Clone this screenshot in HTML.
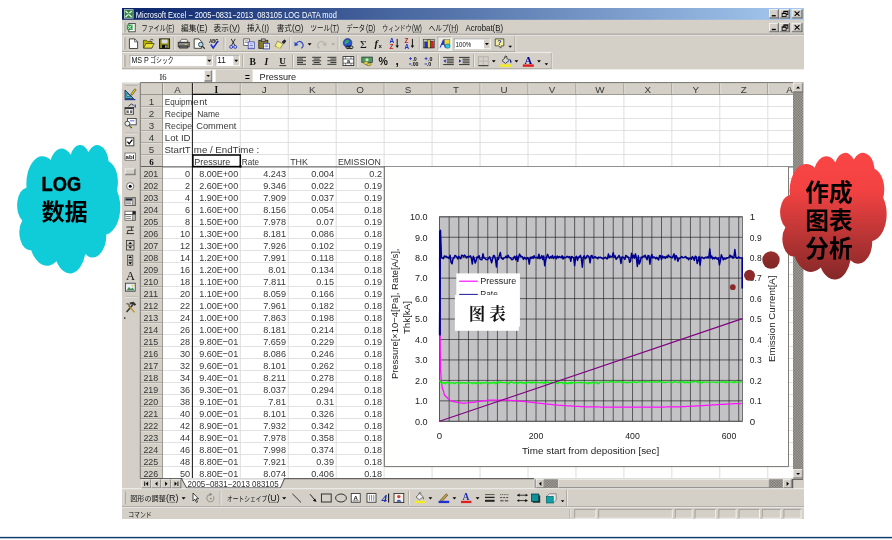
<!DOCTYPE html>
<html><head><meta charset="utf-8"><title>Excel LOG DATA</title>
<style>
html,body{margin:0;padding:0;background:#fff;}
body{width:892px;height:540px;overflow:hidden;font-family:"Liberation Sans",sans-serif;}
svg{display:block;font-family:"Liberation Sans",sans-serif;}
</style></head><body>
<svg width="892" height="540" viewBox="0 0 892 540">
<defs>
<linearGradient id="tg" x1="0" y1="0" x2="1" y2="0"><stop offset="0" stop-color="#0a246a"/><stop offset="1" stop-color="#a6caf0"/></linearGradient>
<linearGradient id="rg" x1="0" y1="0" x2="0" y2="1"><stop offset="0" stop-color="#fb4545"/><stop offset="0.3" stop-color="#f24242"/><stop offset="1" stop-color="#842828"/></linearGradient>
<linearGradient id="rg2" x1="0" y1="0" x2="0" y2="1"><stop offset="0" stop-color="#9a2e2e"/><stop offset="1" stop-color="#7e2626"/></linearGradient>
<pattern id="dith" width="2.7" height="2.7" patternUnits="userSpaceOnUse"><rect width="2.7" height="2.7" fill="#b0ada6"/><rect width="1.35" height="1.35" fill="#6c6a66"/><rect x="1.35" y="1.35" width="1.35" height="1.35" fill="#6c6a66"/></pattern>
<filter id="soft" x="0" y="0" width="100%" height="100%" filterUnits="userSpaceOnUse" color-interpolation-filters="sRGB"><feGaussianBlur stdDeviation="0.38"/></filter>
</defs>
<rect x="0" y="0" width="892" height="540" fill="#fff"/>
<rect x="0" y="536.85" width="892" height="1.45" fill="#123a6b"/>
<g filter="url(#soft)">
<rect x="122" y="8" width="682" height="511" fill="#d4d0c8"/>
<rect x="122" y="8" width="682" height="11.8" fill="url(#tg)"/>
<rect x="124" y="9.3" width="9.4" height="9.2" fill="#e8f0e8"/>
<rect x="124.6" y="9.9" width="8.2" height="8" fill="#2f8040"/>
<path d="M125.6 11l6 6M131.6 11l-6 6" fill="none" stroke="#e6f2e6" stroke-width="1.3"/>
<rect x="124.6" y="13.3" width="8.2" height="1" fill="#2f8040"/>
<text x="135.8" y="17.6" font-size="8.6" fill="#fff" textLength="201" lengthAdjust="spacingAndGlyphs">Microsoft Excel − 2005−0831−2013_083105 LOG DATA mod</text>
<rect x="769.2" y="9.3" width="9.8" height="9.1" fill="#d4d0c8"/>
<line x1="769.2" y1="9.65" x2="779" y2="9.65" stroke="#fff" stroke-width="0.7"/>
<line x1="769.55" y1="9.3" x2="769.55" y2="18.4" stroke="#fff" stroke-width="0.7"/>
<line x1="769.2" y1="18.05" x2="779" y2="18.05" stroke="#404040" stroke-width="0.7"/>
<line x1="778.65" y1="9.3" x2="778.65" y2="18.4" stroke="#404040" stroke-width="0.7"/>
<line x1="769.9" y1="17.35" x2="778.3" y2="17.35" stroke="#808080" stroke-width="0.7"/>
<line x1="777.95" y1="10" x2="777.95" y2="17.7" stroke="#808080" stroke-width="0.7"/>
<rect x="771.8" y="15.1" width="4" height="1.3" fill="#000"/>
<rect x="779.6" y="9.3" width="10.2" height="9.1" fill="#d4d0c8"/>
<line x1="779.6" y1="9.65" x2="789.8" y2="9.65" stroke="#fff" stroke-width="0.7"/>
<line x1="779.95" y1="9.3" x2="779.95" y2="18.4" stroke="#fff" stroke-width="0.7"/>
<line x1="779.6" y1="18.05" x2="789.8" y2="18.05" stroke="#404040" stroke-width="0.7"/>
<line x1="789.45" y1="9.3" x2="789.45" y2="18.4" stroke="#404040" stroke-width="0.7"/>
<line x1="780.3" y1="17.35" x2="789.1" y2="17.35" stroke="#808080" stroke-width="0.7"/>
<line x1="788.75" y1="10" x2="788.75" y2="17.7" stroke="#808080" stroke-width="0.7"/>
<rect x="783.8" y="11.2" width="4" height="3.4" fill="none" stroke="#000" stroke-width="0.8"/>
<rect x="783.8" y="11" width="4" height="1" fill="#000"/>
<rect x="782.1" y="13.2" width="4" height="3.4" fill="#d4d0c8" stroke="#000" stroke-width="0.8"/>
<rect x="782.1" y="13" width="4" height="1" fill="#000"/>
<rect x="791.8" y="9.3" width="10.6" height="9.1" fill="#d4d0c8"/>
<line x1="791.8" y1="9.65" x2="802.4" y2="9.65" stroke="#fff" stroke-width="0.7"/>
<line x1="792.15" y1="9.3" x2="792.15" y2="18.4" stroke="#fff" stroke-width="0.7"/>
<line x1="791.8" y1="18.05" x2="802.4" y2="18.05" stroke="#404040" stroke-width="0.7"/>
<line x1="802.05" y1="9.3" x2="802.05" y2="18.4" stroke="#404040" stroke-width="0.7"/>
<line x1="792.5" y1="17.35" x2="801.7" y2="17.35" stroke="#808080" stroke-width="0.7"/>
<line x1="801.35" y1="10" x2="801.35" y2="17.7" stroke="#808080" stroke-width="0.7"/>
<path d="M794.7 11.35l4.8 4.6M799.5 11.35l-4.8 4.6" fill="none" stroke="#000" stroke-width="1.15"/>
<rect x="769.2" y="23" width="9.8" height="9.1" fill="#d4d0c8"/>
<line x1="769.2" y1="23.35" x2="779" y2="23.35" stroke="#fff" stroke-width="0.7"/>
<line x1="769.55" y1="23" x2="769.55" y2="32.1" stroke="#fff" stroke-width="0.7"/>
<line x1="769.2" y1="31.75" x2="779" y2="31.75" stroke="#404040" stroke-width="0.7"/>
<line x1="778.65" y1="23" x2="778.65" y2="32.1" stroke="#404040" stroke-width="0.7"/>
<line x1="769.9" y1="31.05" x2="778.3" y2="31.05" stroke="#808080" stroke-width="0.7"/>
<line x1="777.95" y1="23.7" x2="777.95" y2="31.4" stroke="#808080" stroke-width="0.7"/>
<rect x="771.8" y="28.8" width="4" height="1.3" fill="#000"/>
<rect x="779.6" y="23" width="10.2" height="9.1" fill="#d4d0c8"/>
<line x1="779.6" y1="23.35" x2="789.8" y2="23.35" stroke="#fff" stroke-width="0.7"/>
<line x1="779.95" y1="23" x2="779.95" y2="32.1" stroke="#fff" stroke-width="0.7"/>
<line x1="779.6" y1="31.75" x2="789.8" y2="31.75" stroke="#404040" stroke-width="0.7"/>
<line x1="789.45" y1="23" x2="789.45" y2="32.1" stroke="#404040" stroke-width="0.7"/>
<line x1="780.3" y1="31.05" x2="789.1" y2="31.05" stroke="#808080" stroke-width="0.7"/>
<line x1="788.75" y1="23.7" x2="788.75" y2="31.4" stroke="#808080" stroke-width="0.7"/>
<rect x="783.8" y="24.9" width="4" height="3.4" fill="none" stroke="#000" stroke-width="0.8"/>
<rect x="783.8" y="24.7" width="4" height="1" fill="#000"/>
<rect x="782.1" y="26.9" width="4" height="3.4" fill="#d4d0c8" stroke="#000" stroke-width="0.8"/>
<rect x="782.1" y="26.7" width="4" height="1" fill="#000"/>
<rect x="791.8" y="23" width="10.6" height="9.1" fill="#d4d0c8"/>
<line x1="791.8" y1="23.35" x2="802.4" y2="23.35" stroke="#fff" stroke-width="0.7"/>
<line x1="792.15" y1="23" x2="792.15" y2="32.1" stroke="#fff" stroke-width="0.7"/>
<line x1="791.8" y1="31.75" x2="802.4" y2="31.75" stroke="#404040" stroke-width="0.7"/>
<line x1="802.05" y1="23" x2="802.05" y2="32.1" stroke="#404040" stroke-width="0.7"/>
<line x1="792.5" y1="31.05" x2="801.7" y2="31.05" stroke="#808080" stroke-width="0.7"/>
<line x1="801.35" y1="23.7" x2="801.35" y2="31.4" stroke="#808080" stroke-width="0.7"/>
<path d="M794.7 25.05l4.8 4.6M799.5 25.05l-4.8 4.6" fill="none" stroke="#000" stroke-width="1.15"/>
<line x1="122" y1="34.3" x2="804" y2="34.3" stroke="#7f7c76" stroke-width="0.9"/>
<line x1="122" y1="35.1" x2="804" y2="35.1" stroke="#fff" stroke-width="0.7"/>
<line x1="124" y1="22.3" x2="124" y2="32.5" stroke="#fff" stroke-width="0.8"/>
<line x1="124.9" y1="22.3" x2="124.9" y2="32.5" stroke="#8a8780" stroke-width="0.8"/>
<rect x="128.8" y="23.4" width="6.4" height="8.4" fill="#fff" stroke="#333" stroke-width="0.8"/>
<rect x="126.8" y="24.6" width="5.8" height="5.4" fill="#2f9a3a"/>
<path d="M127.8 25.6l3.6 3.4M131.4 25.6l-3.6 3.4" fill="none" stroke="#dff" stroke-width="0.9"/>
<text x="141.6" y="31" font-size="7.8" fill="#111" textLength="24.2" lengthAdjust="spacingAndGlyphs" font-family="&quot;Liberation Sans&quot;, &quot;Noto Sans CJK JP&quot;, sans-serif">ファイル</text>
<text x="166.13" y="31" font-size="8.4" fill="#111" textLength="8.15" lengthAdjust="spacingAndGlyphs">(F)</text>
<line x1="168.26" y1="32.1" x2="172.16" y2="32.1" stroke="#444" stroke-width="0.6"/>
<text x="181" y="31" font-size="7.8" fill="#111" textLength="15.4" lengthAdjust="spacingAndGlyphs" font-family="&quot;Liberation Sans&quot;, &quot;Noto Sans CJK JP&quot;, sans-serif">編集</text>
<text x="196.72" y="31" font-size="8.4" fill="#111" textLength="10.56" lengthAdjust="spacingAndGlyphs">(E)</text>
<line x1="199.36" y1="32.1" x2="204.65" y2="32.1" stroke="#444" stroke-width="0.6"/>
<text x="213.6" y="31" font-size="7.8" fill="#111" textLength="15.4" lengthAdjust="spacingAndGlyphs" font-family="&quot;Liberation Sans&quot;, &quot;Noto Sans CJK JP&quot;, sans-serif">表示</text>
<text x="229.32" y="31" font-size="8.4" fill="#111" textLength="10.56" lengthAdjust="spacingAndGlyphs">(V)</text>
<line x1="231.96" y1="32.1" x2="237.25" y2="32.1" stroke="#444" stroke-width="0.6"/>
<text x="246.9" y="31" font-size="7.8" fill="#111" textLength="14.7" lengthAdjust="spacingAndGlyphs" font-family="&quot;Liberation Sans&quot;, &quot;Noto Sans CJK JP&quot;, sans-serif">挿入</text>
<text x="261.81" y="31" font-size="8.4" fill="#111" textLength="7.09" lengthAdjust="spacingAndGlyphs">(I)</text>
<line x1="264.31" y1="32.1" x2="266.4" y2="32.1" stroke="#444" stroke-width="0.6"/>
<text x="276.7" y="31" font-size="7.8" fill="#111" textLength="15.2" lengthAdjust="spacingAndGlyphs" font-family="&quot;Liberation Sans&quot;, &quot;Noto Sans CJK JP&quot;, sans-serif">書式</text>
<text x="292.12" y="31" font-size="8.4" fill="#111" textLength="11.36" lengthAdjust="spacingAndGlyphs">(O)</text>
<line x1="294.74" y1="32.1" x2="300.86" y2="32.1" stroke="#444" stroke-width="0.6"/>
<text x="310.6" y="31" font-size="7.8" fill="#111" textLength="19.5" lengthAdjust="spacingAndGlyphs" font-family="&quot;Liberation Sans&quot;, &quot;Noto Sans CJK JP&quot;, sans-serif">ツール</text>
<text x="330.34" y="31" font-size="8.4" fill="#111" textLength="8.66" lengthAdjust="spacingAndGlyphs">(T)</text>
<line x1="332.59" y1="32.1" x2="336.74" y2="32.1" stroke="#444" stroke-width="0.6"/>
<text x="346.2" y="31" font-size="7.8" fill="#111" textLength="19" lengthAdjust="spacingAndGlyphs" font-family="&quot;Liberation Sans&quot;, &quot;Noto Sans CJK JP&quot;, sans-serif">データ</text>
<text x="365.93" y="31" font-size="8.4" fill="#111" textLength="9.36" lengthAdjust="spacingAndGlyphs">(D)</text>
<line x1="368.18" y1="32.1" x2="373.05" y2="32.1" stroke="#444" stroke-width="0.6"/>
<text x="382.3" y="31" font-size="7.8" fill="#111" textLength="29.2" lengthAdjust="spacingAndGlyphs" font-family="&quot;Liberation Sans&quot;, &quot;Noto Sans CJK JP&quot;, sans-serif">ウィンドウ</text>
<text x="412" y="31" font-size="8.4" fill="#111" textLength="9.89" lengthAdjust="spacingAndGlyphs">(W)</text>
<line x1="414.04" y1="32.1" x2="419.84" y2="32.1" stroke="#444" stroke-width="0.6"/>
<text x="428.7" y="31" font-size="7.8" fill="#111" textLength="20" lengthAdjust="spacingAndGlyphs" font-family="&quot;Liberation Sans&quot;, &quot;Noto Sans CJK JP&quot;, sans-serif">ヘルプ</text>
<text x="448.87" y="31" font-size="8.4" fill="#111" textLength="9.52" lengthAdjust="spacingAndGlyphs">(H)</text>
<line x1="451.15" y1="32.1" x2="456.1" y2="32.1" stroke="#444" stroke-width="0.6"/>
<text x="465.6" y="31" font-size="8.4" fill="#111" textLength="37.4" lengthAdjust="spacingAndGlyphs">Acrobat(B)</text>
<line x1="496.2" y1="32.1" x2="500.8" y2="32.1" stroke="#444" stroke-width="0.6"/>
<line x1="122" y1="51.6" x2="515.4" y2="51.6" stroke="#8f8c85" stroke-width="0.7"/>
<line x1="122" y1="52.4" x2="551.8" y2="52.4" stroke="#fff" stroke-width="0.7"/>
<line x1="122" y1="68.9" x2="551.8" y2="68.9" stroke="#8f8c85" stroke-width="0.7"/>
<line x1="515" y1="35.5" x2="515" y2="51.5" stroke="#8f8c85" stroke-width="0.7"/>
<line x1="515.7" y1="35.5" x2="515.7" y2="51.5" stroke="#fff" stroke-width="0.6"/>
<line x1="551.4" y1="52.8" x2="551.4" y2="68.8" stroke="#8f8c85" stroke-width="0.7"/>
<line x1="552.1" y1="52.8" x2="552.1" y2="68.8" stroke="#fff" stroke-width="0.6"/>
<line x1="124" y1="37.5" x2="124" y2="49.5" stroke="#fff" stroke-width="0.8"/>
<line x1="124.9" y1="37.5" x2="124.9" y2="49.5" stroke="#8a8780" stroke-width="0.8"/>
<line x1="124" y1="55" x2="124" y2="67" stroke="#fff" stroke-width="0.8"/>
<line x1="124.9" y1="55" x2="124.9" y2="67" stroke="#8a8780" stroke-width="0.8"/>
<path d="M129.4 38.9h5.2l3 3v6.6h-8.2z" fill="#fff" stroke="#222" stroke-width="0.8"/>
<path d="M134.6 38.9v3h3" fill="none" stroke="#222" stroke-width="0.6"/>
<path d="M143.4 40.3h3l1 1.2h4.6v6.4h-8.6z" fill="#b8b200" stroke="#3a3800" stroke-width="0.7"/>
<path d="M146 43.5h8.2l-2.4 4.6h-8.2z" fill="#e8e040" stroke="#3a3800" stroke-width="0.7"/>
<path d="M149.9 40.3q2 -2 3.4 -0.2" fill="none" stroke="#222" stroke-width="0.7"/>
<rect x="159.6" y="38.9" width="10" height="9.6" fill="#8a8a10" stroke="#111" stroke-width="0.9"/>
<rect x="161.6" y="39.5" width="6" height="4" fill="#d8d8e8"/>
<rect x="162" y="44.9" width="5.2" height="3.2" fill="#111"/>
<rect x="165.2" y="45.5" width="1.4" height="2.2" fill="#ccc"/>
<line x1="174" y1="37" x2="174" y2="50" stroke="#8a8780" stroke-width="0.7"/>
<line x1="174.7" y1="37" x2="174.7" y2="50" stroke="#fff" stroke-width="0.7"/>
<path d="M179.6 42.3l2 -3h5l1.4 3z" fill="#fff" stroke="#333" stroke-width="0.7"/>
<rect x="178.2" y="42.3" width="11" height="4.6" fill="#8c8c8c" stroke="#222" stroke-width="0.8"/>
<rect x="179.6" y="45.9" width="8.2" height="2.2" fill="#666" stroke="#222" stroke-width="0.6"/>
<rect x="184.8" y="43.9" width="2" height="1" fill="#dcdc40"/>
<path d="M194.2 38.9h4.8l2.6 2.6v6.8h-7.4z" fill="#fff" stroke="#222" stroke-width="0.8"/>
<circle cx="200.8" cy="44.5" r="2.3" fill="#9fe0f0" stroke="#222" stroke-width="0.8"/>
<line x1="202.4" y1="46.3" x2="204.8" y2="48.7" stroke="#222" stroke-width="1.2"/>
<text x="209.2" y="42.5" font-size="4.6" fill="#111" textLength="9" lengthAdjust="spacingAndGlyphs" font-weight="bold">ABC</text>
<path d="M210.8 44.5l2.4 3.4l5 -7" fill="none" stroke="#1a2ad0" stroke-width="1.5"/>
<line x1="224.2" y1="37" x2="224.2" y2="50" stroke="#8a8780" stroke-width="0.7"/>
<line x1="224.9" y1="37" x2="224.9" y2="50" stroke="#fff" stroke-width="0.7"/>
<path d="M231.2 38.9l3.6 6.4M235.2 38.9l-3.6 6.4" fill="none" stroke="#222" stroke-width="0.9"/>
<circle cx="231.2" cy="46.9" r="1.5" fill="none" stroke="#2838c0" stroke-width="0.9"/>
<circle cx="235.2" cy="46.9" r="1.5" fill="none" stroke="#2838c0" stroke-width="0.9"/>
<rect x="243.8" y="38.9" width="5.6" height="6.6" fill="#fff" stroke="#333" stroke-width="0.7"/>
<line x1="245" y1="40.9" x2="248.2" y2="40.9" stroke="#555" stroke-width="0.6"/>
<line x1="245" y1="42.5" x2="248.2" y2="42.5" stroke="#555" stroke-width="0.6"/>
<rect x="248.2" y="41.9" width="6" height="6.8" fill="#fff" stroke="#2a3ab0" stroke-width="0.8"/>
<line x1="249.4" y1="43.9" x2="253" y2="43.9" stroke="#2a3ab0" stroke-width="0.6"/>
<line x1="249.4" y1="45.5" x2="253" y2="45.5" stroke="#2a3ab0" stroke-width="0.6"/>
<line x1="249.4" y1="47.1" x2="253" y2="47.1" stroke="#2a3ab0" stroke-width="0.6"/>
<rect x="258.8" y="40.3" width="9" height="8" fill="#8a7a30" stroke="#222" stroke-width="0.8"/>
<rect x="261.4" y="38.9" width="3.8" height="2.4" fill="#aaa" stroke="#222" stroke-width="0.6"/>
<rect x="263.4" y="43.3" width="6" height="5.6" fill="#fff" stroke="#2a3ab0" stroke-width="0.8"/>
<line x1="264.6" y1="45.1" x2="268.2" y2="45.1" stroke="#2a3ab0" stroke-width="0.6"/>
<line x1="264.6" y1="46.7" x2="268.2" y2="46.7" stroke="#2a3ab0" stroke-width="0.6"/>
<path d="M277.6 41.1l5.4 3l-3 4.6l-5 -2.6z" fill="#f4f088" stroke="#555" stroke-width="0.6"/>
<path d="M282 42.1l2.4 -2.4l1.6 1.2l-2 2.8z" fill="#223" stroke="#111" stroke-width="0.5"/>
<line x1="275.6" y1="47.9" x2="280" y2="48.3" stroke="#e8e060" stroke-width="1.1"/>
<line x1="290" y1="37" x2="290" y2="50" stroke="#8a8780" stroke-width="0.7"/>
<line x1="290.7" y1="37" x2="290.7" y2="50" stroke="#fff" stroke-width="0.7"/>
<path d="M295.8 44.3q3.4 -5.4 7 -0.6q1.2 3 -1.6 4.6" fill="none" stroke="#2848c8" stroke-width="1.15"/>
<path d="M294.4 41.7l0.2 4.6l4 -1.4z" fill="#2848c8"/>
<path d="M307.6 43.3L311.6 43.3L309.6 45.5Z" fill="#000"/>
<path d="M325 44.3q-3.4 -5.4 -7 -0.6q-1.2 3 1.6 4.6" fill="none" stroke="#b8b5ae" stroke-width="1.3"/>
<path d="M326.4 41.7l-0.2 4.6l-4 -1.4z" fill="#b8b5ae"/>
<path d="M331.2 43.3L335.2 43.3L333.2 45.5Z" fill="#aaa7a0"/>
<line x1="338.2" y1="37" x2="338.2" y2="50" stroke="#8a8780" stroke-width="0.7"/>
<line x1="338.9" y1="37" x2="338.9" y2="50" stroke="#fff" stroke-width="0.7"/>
<circle cx="347.6" cy="42.9" r="4.3" fill="#2a58d8" stroke="#123" stroke-width="0.6"/>
<path d="M345.2 41.3q2 -2 4 -0.6q-0.6 2.4 -2.4 2.6q-1.4 1.6 -2.2 -0.4z" fill="#38b048"/>
<ellipse cx="348" cy="47.3" rx="2" ry="1.4" fill="none" stroke="#111" stroke-width="0.9"/>
<ellipse cx="351" cy="47.3" rx="2" ry="1.4" fill="none" stroke="#111" stroke-width="0.9"/>
<text x="360" y="47.5" font-size="10.4" fill="#111" textLength="6.8" lengthAdjust="spacingAndGlyphs" font-family="Liberation Serif">Σ</text>
<text x="374.4" y="47.1" font-size="10.5" fill="#111" font-weight="bold" font-style="italic" font-family="Liberation Serif">f</text>
<text x="378.6" y="47.5" font-size="6" fill="#111" font-weight="bold">x</text>
<text x="389.4" y="43.2" font-size="6.4" fill="#2030c0" font-weight="bold">A</text>
<text x="389.4" y="48.5" font-size="6.4" fill="#c02020" font-weight="bold">Z</text>
<line x1="397.2" y1="38.9" x2="397.2" y2="46.5" stroke="#111" stroke-width="1"/>
<path d="M395.4 45.5h3.6l-1.8 2.6z" fill="#111"/>
<text x="404.6" y="43.2" font-size="6.4" fill="#c02020" font-weight="bold">Z</text>
<text x="404.6" y="48.5" font-size="6.4" fill="#2030c0" font-weight="bold">A</text>
<line x1="412.4" y1="38.9" x2="412.4" y2="46.5" stroke="#111" stroke-width="1"/>
<path d="M410.6 45.5h3.6l-1.8 2.6z" fill="#111"/>
<line x1="419.4" y1="37" x2="419.4" y2="50" stroke="#8a8780" stroke-width="0.7"/>
<line x1="420.1" y1="37" x2="420.1" y2="50" stroke="#fff" stroke-width="0.7"/>
<rect x="423.6" y="39.5" width="11" height="8.4" fill="#c8c8c8" stroke="#333" stroke-width="0.6"/>
<rect x="424.8" y="41.9" width="2.4" height="6" fill="#2030d0" stroke="#111" stroke-width="0.4"/>
<rect x="427.8" y="39.9" width="2.4" height="8" fill="#e8d820" stroke="#111" stroke-width="0.4"/>
<rect x="430.8" y="41.1" width="2.6" height="6.8" fill="#d82020" stroke="#111" stroke-width="0.4"/>
<rect x="437.6" y="36.6" width="14.4" height="14" fill="#ebe9e4"/>
<line x1="437.6" y1="36.9" x2="452" y2="36.9" stroke="#8f8c85" stroke-width="0.6"/>
<line x1="437.9" y1="36.6" x2="437.9" y2="50.6" stroke="#8f8c85" stroke-width="0.6"/>
<line x1="437.6" y1="50.4" x2="452" y2="50.4" stroke="#fff" stroke-width="0.6"/>
<line x1="451.8" y1="36.6" x2="451.8" y2="50.6" stroke="#fff" stroke-width="0.6"/>
<path d="M439.6 47.5l3.4 -8h1.4l2 8h-1.8l-0.6 -2.4h-2.2l-1 2.4z" fill="#2438c8"/>
<rect x="444.4" y="39.5" width="5.4" height="5.4" fill="#e8d840" stroke="#665" stroke-width="0.5"/>
<ellipse cx="447.6" cy="46.1" rx="2.6" ry="2.2" fill="#28c8d8" stroke="#156" stroke-width="0.5"/>
<rect x="454" y="38.6" width="36.4" height="10.4" fill="#fff"/>
<line x1="454" y1="38.9" x2="490.4" y2="38.9" stroke="#808080" stroke-width="0.6"/>
<line x1="454.3" y1="38.6" x2="454.3" y2="49" stroke="#808080" stroke-width="0.6"/>
<line x1="454" y1="48.7" x2="490.4" y2="48.7" stroke="#fff" stroke-width="0.6"/>
<line x1="490.1" y1="38.6" x2="490.1" y2="49" stroke="#fff" stroke-width="0.6"/>
<text x="455.6" y="46.8" font-size="7.8" fill="#111" textLength="15.6" lengthAdjust="spacingAndGlyphs">100%</text>
<rect x="484" y="39.3" width="5.8" height="9.1" fill="#d4d0c8"/>
<path d="M484.9 43.1L488.9 43.1L486.9 45.3Z" fill="#000"/>
<path d="M495.2 38.9h8.6v7h-2.6l-0.4 2.2l-2 -2.2h-3.6z" fill="#f4f0a0" stroke="#333" stroke-width="0.8"/>
<text x="499.5" y="45.1" font-size="7.2" fill="#2030b0" text-anchor="middle" font-weight="bold">?</text>
<path d="M508.3 45.75L512.1 45.75L510.2 47.85Z" fill="#000"/>
<rect x="129.6" y="55.3" width="83" height="10.6" fill="#fff"/>
<line x1="129.6" y1="55.6" x2="212.6" y2="55.6" stroke="#808080" stroke-width="0.6"/>
<line x1="129.9" y1="55.3" x2="129.9" y2="65.9" stroke="#808080" stroke-width="0.6"/>
<line x1="129.6" y1="65.6" x2="212.6" y2="65.6" stroke="#fff" stroke-width="0.6"/>
<line x1="212.3" y1="55.3" x2="212.3" y2="65.9" stroke="#fff" stroke-width="0.6"/>
<text x="131.4" y="63.4" font-size="8.4" fill="#111" textLength="17.4" lengthAdjust="spacingAndGlyphs">MS P</text>
<text x="150.2" y="63.4" font-size="7.6" fill="#111" textLength="23.4" lengthAdjust="spacingAndGlyphs" font-family="&quot;Liberation Sans&quot;, &quot;Noto Sans CJK JP&quot;, sans-serif">ゴシック</text>
<rect x="206.6" y="56" width="5.4" height="9.2" fill="#d4d0c8"/>
<path d="M207.3 59.7L211.3 59.7L209.3 61.9Z" fill="#000"/>
<rect x="215.6" y="55.3" width="24" height="10.6" fill="#fff"/>
<line x1="215.6" y1="55.6" x2="239.6" y2="55.6" stroke="#808080" stroke-width="0.6"/>
<line x1="215.9" y1="55.3" x2="215.9" y2="65.9" stroke="#808080" stroke-width="0.6"/>
<line x1="215.6" y1="65.6" x2="239.6" y2="65.6" stroke="#fff" stroke-width="0.6"/>
<line x1="239.3" y1="55.3" x2="239.3" y2="65.9" stroke="#fff" stroke-width="0.6"/>
<text x="217.2" y="63.4" font-size="8.4" fill="#111" textLength="8.6" lengthAdjust="spacingAndGlyphs">11</text>
<rect x="233.4" y="56" width="5.6" height="9.2" fill="#d4d0c8"/>
<path d="M234.2 59.7L238.2 59.7L236.2 61.9Z" fill="#000"/>
<line x1="242.6" y1="54.5" x2="242.6" y2="67.5" stroke="#8a8780" stroke-width="0.7"/>
<line x1="243.3" y1="54.5" x2="243.3" y2="67.5" stroke="#fff" stroke-width="0.7"/>
<text x="249.4" y="64.6" font-size="9.6" fill="#111" font-weight="bold" font-family="Liberation Serif">B</text>
<text x="264.4" y="64.6" font-size="9.6" fill="#111" font-weight="bold" font-style="italic" font-family="Liberation Serif">I</text>
<text x="279.2" y="64.2" font-size="9.2" fill="#111" font-weight="bold" font-family="Liberation Serif">U</text>
<line x1="279.4" y1="65.6" x2="286.2" y2="65.6" stroke="#111" stroke-width="0.8"/>
<line x1="292.8" y1="54.5" x2="292.8" y2="67.5" stroke="#8a8780" stroke-width="0.7"/>
<line x1="293.5" y1="54.5" x2="293.5" y2="67.5" stroke="#fff" stroke-width="0.7"/>
<line x1="297" y1="57.3" x2="306" y2="57.3" stroke="#222" stroke-width="0.9"/>
<line x1="297" y1="59.05" x2="303" y2="59.05" stroke="#222" stroke-width="0.9"/>
<line x1="297" y1="60.8" x2="306" y2="60.8" stroke="#222" stroke-width="0.9"/>
<line x1="297" y1="62.55" x2="303" y2="62.55" stroke="#222" stroke-width="0.9"/>
<line x1="297" y1="64.3" x2="306" y2="64.3" stroke="#222" stroke-width="0.9"/>
<line x1="312.2" y1="57.3" x2="321.2" y2="57.3" stroke="#222" stroke-width="0.9"/>
<line x1="313.7" y1="59.05" x2="319.7" y2="59.05" stroke="#222" stroke-width="0.9"/>
<line x1="312.2" y1="60.8" x2="321.2" y2="60.8" stroke="#222" stroke-width="0.9"/>
<line x1="313.7" y1="62.55" x2="319.7" y2="62.55" stroke="#222" stroke-width="0.9"/>
<line x1="312.2" y1="64.3" x2="321.2" y2="64.3" stroke="#222" stroke-width="0.9"/>
<line x1="327.4" y1="57.3" x2="336.4" y2="57.3" stroke="#222" stroke-width="0.9"/>
<line x1="330.4" y1="59.05" x2="336.4" y2="59.05" stroke="#222" stroke-width="0.9"/>
<line x1="327.4" y1="60.8" x2="336.4" y2="60.8" stroke="#222" stroke-width="0.9"/>
<line x1="330.4" y1="62.55" x2="336.4" y2="62.55" stroke="#222" stroke-width="0.9"/>
<line x1="327.4" y1="64.3" x2="336.4" y2="64.3" stroke="#222" stroke-width="0.9"/>
<rect x="343" y="56.6" width="10.8" height="9" fill="#fff" stroke="#222" stroke-width="0.8"/>
<line x1="343" y1="59" x2="353.8" y2="59" stroke="#222" stroke-width="0.6"/>
<line x1="343" y1="63.2" x2="353.8" y2="63.2" stroke="#222" stroke-width="0.6"/>
<text x="348.4" y="63" font-size="5.4" fill="#111" text-anchor="middle" font-weight="bold">a</text>
<line x1="345.6" y1="59" x2="345.6" y2="56.6" stroke="#222" stroke-width="0.5"/>
<line x1="351" y1="59" x2="351" y2="56.6" stroke="#222" stroke-width="0.5"/>
<line x1="345.6" y1="65.6" x2="345.6" y2="63.2" stroke="#222" stroke-width="0.5"/>
<line x1="351" y1="65.6" x2="351" y2="63.2" stroke="#222" stroke-width="0.5"/>
<line x1="357" y1="54.5" x2="357" y2="67.5" stroke="#8a8780" stroke-width="0.7"/>
<line x1="357.7" y1="54.5" x2="357.7" y2="67.5" stroke="#fff" stroke-width="0.7"/>
<rect x="361.8" y="57" width="10.6" height="5.6" fill="#4a9a58" stroke="#223" stroke-width="0.6"/>
<circle cx="367" cy="59.8" r="1.6" fill="#cfe8cf"/>
<ellipse cx="368.6" cy="64.2" rx="2.6" ry="1.5" fill="#e0d040" stroke="#443" stroke-width="0.5"/>
<ellipse cx="366" cy="63" rx="2.4" ry="1.4" fill="#e8dc50" stroke="#443" stroke-width="0.5"/>
<text x="378.4" y="65" font-size="10" fill="#111" textLength="9.4" lengthAdjust="spacingAndGlyphs" font-weight="bold">%</text>
<text x="395.6" y="65" font-size="12" fill="#111" font-weight="bold">,</text>
<text x="412.4" y="60.8" font-size="5" fill="#111" textLength="4.4" lengthAdjust="spacingAndGlyphs" font-weight="bold">.0</text>
<text x="411.2" y="65.6" font-size="5" fill="#111" textLength="7.4" lengthAdjust="spacingAndGlyphs" font-weight="bold">.00</text>
<path d="M409 58.6h3M410.5 57.1v3" fill="none" stroke="#2030c0" stroke-width="0.8"/>
<path d="M409 64l2.4 0" fill="none" stroke="#2030c0" stroke-width="0.9"/>
<text x="428" y="60.8" font-size="5" fill="#111" textLength="4.4" lengthAdjust="spacingAndGlyphs" font-weight="bold">.0</text>
<text x="426.8" y="65.6" font-size="5" fill="#111" textLength="4.4" lengthAdjust="spacingAndGlyphs" font-weight="bold">.0</text>
<path d="M424.6 58.6h3M426.1 57.1v3" fill="none" stroke="#2030c0" stroke-width="0.8"/>
<path d="M424.6 64l2.4 0" fill="none" stroke="#2030c0" stroke-width="0.9"/>
<line x1="438.8" y1="54.5" x2="438.8" y2="67.5" stroke="#8a8780" stroke-width="0.7"/>
<line x1="439.5" y1="54.5" x2="439.5" y2="67.5" stroke="#fff" stroke-width="0.7"/>
<line x1="443.2" y1="57.4" x2="453.8" y2="57.4" stroke="#222" stroke-width="0.9"/>
<line x1="446.8" y1="59.2" x2="453.8" y2="59.2" stroke="#222" stroke-width="0.9"/>
<line x1="446.8" y1="61" x2="453.8" y2="61" stroke="#222" stroke-width="0.9"/>
<line x1="446.8" y1="62.8" x2="453.8" y2="62.8" stroke="#222" stroke-width="0.9"/>
<line x1="443.2" y1="64.6" x2="453.8" y2="64.6" stroke="#222" stroke-width="0.9"/>
<path d="M445.8 59.2v3.6l-2.4 -1.8z" fill="#2030c0"/>
<line x1="459" y1="57.4" x2="469.6" y2="57.4" stroke="#222" stroke-width="0.9"/>
<line x1="462.6" y1="59.2" x2="469.6" y2="59.2" stroke="#222" stroke-width="0.9"/>
<line x1="462.6" y1="61" x2="469.6" y2="61" stroke="#222" stroke-width="0.9"/>
<line x1="462.6" y1="62.8" x2="469.6" y2="62.8" stroke="#222" stroke-width="0.9"/>
<line x1="459" y1="64.6" x2="469.6" y2="64.6" stroke="#222" stroke-width="0.9"/>
<path d="M459 59.2v3.6l2.4 -1.8z" fill="#2030c0"/>
<line x1="473.6" y1="54.5" x2="473.6" y2="67.5" stroke="#8a8780" stroke-width="0.7"/>
<line x1="474.3" y1="54.5" x2="474.3" y2="67.5" stroke="#fff" stroke-width="0.7"/>
<rect x="478.6" y="56.8" width="9.6" height="8.8" fill="none" stroke="#aaa7a0" stroke-width="0.7"/>
<line x1="483.4" y1="56.8" x2="483.4" y2="65.6" stroke="#aaa7a0" stroke-width="0.6"/>
<line x1="478.6" y1="61.2" x2="488.2" y2="61.2" stroke="#aaa7a0" stroke-width="0.6"/>
<line x1="478.4" y1="65.7" x2="488.4" y2="65.7" stroke="#222" stroke-width="0.9"/>
<path d="M491.9 60.35L495.7 60.35L493.8 62.45Z" fill="#000"/>
<path d="M502 60.6l3.6 -3.4l3.6 3.2l-3.8 3z" fill="#d8d8d8" stroke="#222" stroke-width="0.8"/>
<path d="M504 57.6q1.6 -3 3.4 -0.4" fill="none" stroke="#222" stroke-width="0.9"/>
<path d="M508.6 58.2l2.2 1.6q1.4 2 0.2 3.6q-1.4 -1.6 -1 -3.4z" fill="#102090"/>
<rect x="500.2" y="64.4" width="10.8" height="2.4" fill="#f4ec20"/>
<path d="M514.5 60.35L518.3 60.35L516.4 62.45Z" fill="#000"/>
<text x="528.3" y="63.8" font-size="10.6" fill="#000090" text-anchor="middle" font-weight="bold" font-family="Liberation Serif">A</text>
<rect x="522.8" y="64.4" width="11" height="2.4" fill="#e02020"/>
<path d="M537.1 60.35L540.9 60.35L539 62.45Z" fill="#000"/>
<path d="M544.6 63.2L548.2 63.2L546.4 65.2Z" fill="#000"/>
<rect x="122" y="69.4" width="682" height="13" fill="#fff"/>
<text x="163" y="79.6" font-size="8.6" fill="#111" text-anchor="middle" font-family="Liberation Serif">I6</text>
<rect x="204.3" y="70.3" width="7.8" height="11.2" fill="#d4d0c8"/>
<line x1="204.3" y1="70.6" x2="212.1" y2="70.6" stroke="#fff" stroke-width="0.6"/>
<line x1="204.6" y1="70.3" x2="204.6" y2="81.5" stroke="#fff" stroke-width="0.6"/>
<line x1="204.3" y1="81.2" x2="212.1" y2="81.2" stroke="#404040" stroke-width="0.6"/>
<line x1="211.8" y1="70.3" x2="211.8" y2="81.5" stroke="#404040" stroke-width="0.6"/>
<line x1="204.9" y1="80.6" x2="211.5" y2="80.6" stroke="#808080" stroke-width="0.6"/>
<line x1="211.2" y1="70.9" x2="211.2" y2="80.9" stroke="#808080" stroke-width="0.6"/>
<path d="M206.4 75L210 75L208.2 77Z" fill="#000"/>
<rect x="215.6" y="69.6" width="37" height="12.7" fill="#d4d0c8"/>
<text x="247.4" y="79.6" font-size="8.4" fill="#000" text-anchor="middle" font-weight="bold">=</text>
<text x="259.6" y="79.9" font-size="9.8" fill="#222" textLength="36.6" lengthAdjust="spacingAndGlyphs">Pressure</text>
<!-- sheet -->
<rect x="122" y="82.3" width="18.6" height="406.2" fill="#d4d0c8"/>
<line x1="122" y1="82.6" x2="140.6" y2="82.6" stroke="#fff" stroke-width="0.6"/>
<line x1="125" y1="84.2" x2="137.5" y2="84.2" stroke="#fff" stroke-width="0.7"/>
<line x1="125" y1="85" x2="137.5" y2="85" stroke="#8f8c85" stroke-width="0.7"/>
<rect x="140.6" y="82.4" width="652.4" height="396.3" fill="#fff"/>
<rect x="140.6" y="82.4" width="652.4" height="12.1" fill="#d4d0c8"/>
<rect x="140.6" y="82.4" width="21.9" height="396.3" fill="#d4d0c8"/>
<line x1="140.3" y1="82.4" x2="140.3" y2="478.7" stroke="#77746e" stroke-width="1"/>
<line x1="140.6" y1="82.6" x2="793" y2="82.6" stroke="#77746e" stroke-width="1"/>
<line x1="162.5" y1="83.2" x2="162.5" y2="94.5" stroke="#8a8780" stroke-width="0.8"/>
<line x1="163.3" y1="83.2" x2="163.3" y2="94.5" stroke="#f4f2ee" stroke-width="0.6"/>
<line x1="192.5" y1="83.2" x2="192.5" y2="94.5" stroke="#8a8780" stroke-width="0.8"/>
<line x1="193.3" y1="83.2" x2="193.3" y2="94.5" stroke="#f4f2ee" stroke-width="0.6"/>
<line x1="240.3" y1="83.2" x2="240.3" y2="94.5" stroke="#8a8780" stroke-width="0.8"/>
<line x1="241.1" y1="83.2" x2="241.1" y2="94.5" stroke="#f4f2ee" stroke-width="0.6"/>
<line x1="288.25" y1="83.2" x2="288.25" y2="94.5" stroke="#8a8780" stroke-width="0.8"/>
<line x1="289.05" y1="83.2" x2="289.05" y2="94.5" stroke="#f4f2ee" stroke-width="0.6"/>
<line x1="336.2" y1="83.2" x2="336.2" y2="94.5" stroke="#8a8780" stroke-width="0.8"/>
<line x1="337" y1="83.2" x2="337" y2="94.5" stroke="#f4f2ee" stroke-width="0.6"/>
<line x1="384.15" y1="83.2" x2="384.15" y2="94.5" stroke="#8a8780" stroke-width="0.8"/>
<line x1="384.95" y1="83.2" x2="384.95" y2="94.5" stroke="#f4f2ee" stroke-width="0.6"/>
<line x1="432.1" y1="83.2" x2="432.1" y2="94.5" stroke="#8a8780" stroke-width="0.8"/>
<line x1="432.9" y1="83.2" x2="432.9" y2="94.5" stroke="#f4f2ee" stroke-width="0.6"/>
<line x1="480.05" y1="83.2" x2="480.05" y2="94.5" stroke="#8a8780" stroke-width="0.8"/>
<line x1="480.85" y1="83.2" x2="480.85" y2="94.5" stroke="#f4f2ee" stroke-width="0.6"/>
<line x1="528" y1="83.2" x2="528" y2="94.5" stroke="#8a8780" stroke-width="0.8"/>
<line x1="528.8" y1="83.2" x2="528.8" y2="94.5" stroke="#f4f2ee" stroke-width="0.6"/>
<line x1="575.95" y1="83.2" x2="575.95" y2="94.5" stroke="#8a8780" stroke-width="0.8"/>
<line x1="576.75" y1="83.2" x2="576.75" y2="94.5" stroke="#f4f2ee" stroke-width="0.6"/>
<line x1="623.9" y1="83.2" x2="623.9" y2="94.5" stroke="#8a8780" stroke-width="0.8"/>
<line x1="624.7" y1="83.2" x2="624.7" y2="94.5" stroke="#f4f2ee" stroke-width="0.6"/>
<line x1="671.85" y1="83.2" x2="671.85" y2="94.5" stroke="#8a8780" stroke-width="0.8"/>
<line x1="672.65" y1="83.2" x2="672.65" y2="94.5" stroke="#f4f2ee" stroke-width="0.6"/>
<line x1="719.8" y1="83.2" x2="719.8" y2="94.5" stroke="#8a8780" stroke-width="0.8"/>
<line x1="720.6" y1="83.2" x2="720.6" y2="94.5" stroke="#f4f2ee" stroke-width="0.6"/>
<line x1="767.75" y1="83.2" x2="767.75" y2="94.5" stroke="#8a8780" stroke-width="0.8"/>
<line x1="768.55" y1="83.2" x2="768.55" y2="94.5" stroke="#f4f2ee" stroke-width="0.6"/>
<line x1="140.6" y1="94.5" x2="793" y2="94.5" stroke="#8a8780" stroke-width="0.8"/>
<text x="177.5" y="92.8" font-size="9.8" fill="#383838" text-anchor="middle">A</text>
<text x="216.4" y="92.6" font-size="9.3" fill="#111" text-anchor="middle" font-weight="bold" font-family="Liberation Serif">I</text>
<text x="264.27" y="92.8" font-size="9.8" fill="#383838" text-anchor="middle">J</text>
<text x="312.23" y="92.8" font-size="9.8" fill="#383838" text-anchor="middle">K</text>
<text x="360.18" y="92.8" font-size="9.8" fill="#383838" text-anchor="middle">O</text>
<text x="408.12" y="92.8" font-size="9.8" fill="#383838" text-anchor="middle">S</text>
<text x="456.08" y="92.8" font-size="9.8" fill="#383838" text-anchor="middle">T</text>
<text x="504.02" y="92.8" font-size="9.8" fill="#383838" text-anchor="middle">U</text>
<text x="551.98" y="92.8" font-size="9.8" fill="#383838" text-anchor="middle">V</text>
<text x="599.93" y="92.8" font-size="9.8" fill="#383838" text-anchor="middle">W</text>
<text x="647.88" y="92.8" font-size="9.8" fill="#383838" text-anchor="middle">X</text>
<text x="695.83" y="92.8" font-size="9.8" fill="#383838" text-anchor="middle">Y</text>
<text x="743.77" y="92.8" font-size="9.8" fill="#383838" text-anchor="middle">Z</text>
<text x="792.8" y="92.8" font-size="9.8" fill="#333" text-anchor="end">A</text>
<line x1="140.6" y1="106.5" x2="162.5" y2="106.5" stroke="#8a8780" stroke-width="0.7"/>
<line x1="140.6" y1="107.2" x2="162.5" y2="107.2" stroke="#f4f2ee" stroke-width="0.5"/>
<text x="151.4" y="104.9" font-size="9.8" fill="#383838" text-anchor="middle">1</text>
<line x1="140.6" y1="118.5" x2="162.5" y2="118.5" stroke="#8a8780" stroke-width="0.7"/>
<line x1="140.6" y1="119.2" x2="162.5" y2="119.2" stroke="#f4f2ee" stroke-width="0.5"/>
<text x="151.4" y="116.9" font-size="9.8" fill="#383838" text-anchor="middle">2</text>
<line x1="140.6" y1="130.5" x2="162.5" y2="130.5" stroke="#8a8780" stroke-width="0.7"/>
<line x1="140.6" y1="131.2" x2="162.5" y2="131.2" stroke="#f4f2ee" stroke-width="0.5"/>
<text x="151.4" y="128.9" font-size="9.8" fill="#383838" text-anchor="middle">3</text>
<line x1="140.6" y1="142.5" x2="162.5" y2="142.5" stroke="#8a8780" stroke-width="0.7"/>
<line x1="140.6" y1="143.2" x2="162.5" y2="143.2" stroke="#f4f2ee" stroke-width="0.5"/>
<text x="151.4" y="140.9" font-size="9.8" fill="#383838" text-anchor="middle">4</text>
<line x1="140.6" y1="154.5" x2="162.5" y2="154.5" stroke="#8a8780" stroke-width="0.7"/>
<line x1="140.6" y1="155.2" x2="162.5" y2="155.2" stroke="#f4f2ee" stroke-width="0.5"/>
<text x="151.4" y="152.9" font-size="9.8" fill="#383838" text-anchor="middle">5</text>
<line x1="140.6" y1="166.5" x2="162.5" y2="166.5" stroke="#8a8780" stroke-width="0.7"/>
<line x1="140.6" y1="167.2" x2="162.5" y2="167.2" stroke="#f4f2ee" stroke-width="0.5"/>
<text x="151.4" y="164.8" font-size="9" fill="#111" text-anchor="middle" font-weight="bold" font-family="Liberation Serif">6</text>
<line x1="140.6" y1="178.5" x2="162.5" y2="178.5" stroke="#8a8780" stroke-width="0.7"/>
<line x1="140.6" y1="179.2" x2="162.5" y2="179.2" stroke="#f4f2ee" stroke-width="0.5"/>
<text x="143.4" y="177" font-size="9.8" fill="#333" textLength="14.8" lengthAdjust="spacingAndGlyphs">201</text>
<line x1="140.6" y1="190.5" x2="162.5" y2="190.5" stroke="#8a8780" stroke-width="0.7"/>
<line x1="140.6" y1="191.2" x2="162.5" y2="191.2" stroke="#f4f2ee" stroke-width="0.5"/>
<text x="143.4" y="189" font-size="9.8" fill="#333" textLength="14.8" lengthAdjust="spacingAndGlyphs">202</text>
<line x1="140.6" y1="202.5" x2="162.5" y2="202.5" stroke="#8a8780" stroke-width="0.7"/>
<line x1="140.6" y1="203.2" x2="162.5" y2="203.2" stroke="#f4f2ee" stroke-width="0.5"/>
<text x="143.4" y="201" font-size="9.8" fill="#333" textLength="14.8" lengthAdjust="spacingAndGlyphs">203</text>
<line x1="140.6" y1="214.5" x2="162.5" y2="214.5" stroke="#8a8780" stroke-width="0.7"/>
<line x1="140.6" y1="215.2" x2="162.5" y2="215.2" stroke="#f4f2ee" stroke-width="0.5"/>
<text x="143.4" y="213" font-size="9.8" fill="#333" textLength="14.8" lengthAdjust="spacingAndGlyphs">204</text>
<line x1="140.6" y1="226.5" x2="162.5" y2="226.5" stroke="#8a8780" stroke-width="0.7"/>
<line x1="140.6" y1="227.2" x2="162.5" y2="227.2" stroke="#f4f2ee" stroke-width="0.5"/>
<text x="143.4" y="225" font-size="9.8" fill="#333" textLength="14.8" lengthAdjust="spacingAndGlyphs">205</text>
<line x1="140.6" y1="238.5" x2="162.5" y2="238.5" stroke="#8a8780" stroke-width="0.7"/>
<line x1="140.6" y1="239.2" x2="162.5" y2="239.2" stroke="#f4f2ee" stroke-width="0.5"/>
<text x="143.4" y="237" font-size="9.8" fill="#333" textLength="14.8" lengthAdjust="spacingAndGlyphs">206</text>
<line x1="140.6" y1="250.5" x2="162.5" y2="250.5" stroke="#8a8780" stroke-width="0.7"/>
<line x1="140.6" y1="251.2" x2="162.5" y2="251.2" stroke="#f4f2ee" stroke-width="0.5"/>
<text x="143.4" y="249" font-size="9.8" fill="#333" textLength="14.8" lengthAdjust="spacingAndGlyphs">207</text>
<line x1="140.6" y1="262.5" x2="162.5" y2="262.5" stroke="#8a8780" stroke-width="0.7"/>
<line x1="140.6" y1="263.2" x2="162.5" y2="263.2" stroke="#f4f2ee" stroke-width="0.5"/>
<text x="143.4" y="261" font-size="9.8" fill="#333" textLength="14.8" lengthAdjust="spacingAndGlyphs">208</text>
<line x1="140.6" y1="274.5" x2="162.5" y2="274.5" stroke="#8a8780" stroke-width="0.7"/>
<line x1="140.6" y1="275.2" x2="162.5" y2="275.2" stroke="#f4f2ee" stroke-width="0.5"/>
<text x="143.4" y="273" font-size="9.8" fill="#333" textLength="14.8" lengthAdjust="spacingAndGlyphs">209</text>
<line x1="140.6" y1="286.5" x2="162.5" y2="286.5" stroke="#8a8780" stroke-width="0.7"/>
<line x1="140.6" y1="287.2" x2="162.5" y2="287.2" stroke="#f4f2ee" stroke-width="0.5"/>
<text x="143.4" y="285" font-size="9.8" fill="#333" textLength="14.8" lengthAdjust="spacingAndGlyphs">210</text>
<line x1="140.6" y1="298.5" x2="162.5" y2="298.5" stroke="#8a8780" stroke-width="0.7"/>
<line x1="140.6" y1="299.2" x2="162.5" y2="299.2" stroke="#f4f2ee" stroke-width="0.5"/>
<text x="143.4" y="297" font-size="9.8" fill="#333" textLength="14.8" lengthAdjust="spacingAndGlyphs">211</text>
<line x1="140.6" y1="310.5" x2="162.5" y2="310.5" stroke="#8a8780" stroke-width="0.7"/>
<line x1="140.6" y1="311.2" x2="162.5" y2="311.2" stroke="#f4f2ee" stroke-width="0.5"/>
<text x="143.4" y="309" font-size="9.8" fill="#333" textLength="14.8" lengthAdjust="spacingAndGlyphs">212</text>
<line x1="140.6" y1="322.5" x2="162.5" y2="322.5" stroke="#8a8780" stroke-width="0.7"/>
<line x1="140.6" y1="323.2" x2="162.5" y2="323.2" stroke="#f4f2ee" stroke-width="0.5"/>
<text x="143.4" y="321" font-size="9.8" fill="#333" textLength="14.8" lengthAdjust="spacingAndGlyphs">213</text>
<line x1="140.6" y1="334.5" x2="162.5" y2="334.5" stroke="#8a8780" stroke-width="0.7"/>
<line x1="140.6" y1="335.2" x2="162.5" y2="335.2" stroke="#f4f2ee" stroke-width="0.5"/>
<text x="143.4" y="333" font-size="9.8" fill="#333" textLength="14.8" lengthAdjust="spacingAndGlyphs">214</text>
<line x1="140.6" y1="346.5" x2="162.5" y2="346.5" stroke="#8a8780" stroke-width="0.7"/>
<line x1="140.6" y1="347.2" x2="162.5" y2="347.2" stroke="#f4f2ee" stroke-width="0.5"/>
<text x="143.4" y="345" font-size="9.8" fill="#333" textLength="14.8" lengthAdjust="spacingAndGlyphs">215</text>
<line x1="140.6" y1="358.5" x2="162.5" y2="358.5" stroke="#8a8780" stroke-width="0.7"/>
<line x1="140.6" y1="359.2" x2="162.5" y2="359.2" stroke="#f4f2ee" stroke-width="0.5"/>
<text x="143.4" y="357" font-size="9.8" fill="#333" textLength="14.8" lengthAdjust="spacingAndGlyphs">216</text>
<line x1="140.6" y1="370.5" x2="162.5" y2="370.5" stroke="#8a8780" stroke-width="0.7"/>
<line x1="140.6" y1="371.2" x2="162.5" y2="371.2" stroke="#f4f2ee" stroke-width="0.5"/>
<text x="143.4" y="369" font-size="9.8" fill="#333" textLength="14.8" lengthAdjust="spacingAndGlyphs">217</text>
<line x1="140.6" y1="382.5" x2="162.5" y2="382.5" stroke="#8a8780" stroke-width="0.7"/>
<line x1="140.6" y1="383.2" x2="162.5" y2="383.2" stroke="#f4f2ee" stroke-width="0.5"/>
<text x="143.4" y="381" font-size="9.8" fill="#333" textLength="14.8" lengthAdjust="spacingAndGlyphs">218</text>
<line x1="140.6" y1="394.5" x2="162.5" y2="394.5" stroke="#8a8780" stroke-width="0.7"/>
<line x1="140.6" y1="395.2" x2="162.5" y2="395.2" stroke="#f4f2ee" stroke-width="0.5"/>
<text x="143.4" y="393" font-size="9.8" fill="#333" textLength="14.8" lengthAdjust="spacingAndGlyphs">219</text>
<line x1="140.6" y1="406.5" x2="162.5" y2="406.5" stroke="#8a8780" stroke-width="0.7"/>
<line x1="140.6" y1="407.2" x2="162.5" y2="407.2" stroke="#f4f2ee" stroke-width="0.5"/>
<text x="143.4" y="405" font-size="9.8" fill="#333" textLength="14.8" lengthAdjust="spacingAndGlyphs">220</text>
<line x1="140.6" y1="418.5" x2="162.5" y2="418.5" stroke="#8a8780" stroke-width="0.7"/>
<line x1="140.6" y1="419.2" x2="162.5" y2="419.2" stroke="#f4f2ee" stroke-width="0.5"/>
<text x="143.4" y="417" font-size="9.8" fill="#333" textLength="14.8" lengthAdjust="spacingAndGlyphs">221</text>
<line x1="140.6" y1="430.5" x2="162.5" y2="430.5" stroke="#8a8780" stroke-width="0.7"/>
<line x1="140.6" y1="431.2" x2="162.5" y2="431.2" stroke="#f4f2ee" stroke-width="0.5"/>
<text x="143.4" y="429" font-size="9.8" fill="#333" textLength="14.8" lengthAdjust="spacingAndGlyphs">222</text>
<line x1="140.6" y1="442.5" x2="162.5" y2="442.5" stroke="#8a8780" stroke-width="0.7"/>
<line x1="140.6" y1="443.2" x2="162.5" y2="443.2" stroke="#f4f2ee" stroke-width="0.5"/>
<text x="143.4" y="441" font-size="9.8" fill="#333" textLength="14.8" lengthAdjust="spacingAndGlyphs">223</text>
<line x1="140.6" y1="454.5" x2="162.5" y2="454.5" stroke="#8a8780" stroke-width="0.7"/>
<line x1="140.6" y1="455.2" x2="162.5" y2="455.2" stroke="#f4f2ee" stroke-width="0.5"/>
<text x="143.4" y="453" font-size="9.8" fill="#333" textLength="14.8" lengthAdjust="spacingAndGlyphs">224</text>
<line x1="140.6" y1="466.5" x2="162.5" y2="466.5" stroke="#8a8780" stroke-width="0.7"/>
<line x1="140.6" y1="467.2" x2="162.5" y2="467.2" stroke="#f4f2ee" stroke-width="0.5"/>
<text x="143.4" y="465" font-size="9.8" fill="#333" textLength="14.8" lengthAdjust="spacingAndGlyphs">225</text>
<line x1="140.6" y1="478.5" x2="162.5" y2="478.5" stroke="#8a8780" stroke-width="0.7"/>
<line x1="140.6" y1="479.2" x2="162.5" y2="479.2" stroke="#f4f2ee" stroke-width="0.5"/>
<text x="143.4" y="477" font-size="9.8" fill="#333" textLength="14.8" lengthAdjust="spacingAndGlyphs">226</text>
<line x1="162.5" y1="83.2" x2="162.5" y2="478.7" stroke="#8a8780" stroke-width="0.8"/>
<line x1="163" y1="106.5" x2="793" y2="106.5" stroke="#dadada" stroke-width="0.8"/>
<line x1="163" y1="118.5" x2="793" y2="118.5" stroke="#dadada" stroke-width="0.8"/>
<line x1="163" y1="130.5" x2="793" y2="130.5" stroke="#dadada" stroke-width="0.8"/>
<line x1="163" y1="142.5" x2="793" y2="142.5" stroke="#dadada" stroke-width="0.8"/>
<line x1="163" y1="154.5" x2="793" y2="154.5" stroke="#dadada" stroke-width="0.8"/>
<line x1="163" y1="178.5" x2="793" y2="178.5" stroke="#dadada" stroke-width="0.8"/>
<line x1="163" y1="190.5" x2="793" y2="190.5" stroke="#dadada" stroke-width="0.8"/>
<line x1="163" y1="202.5" x2="793" y2="202.5" stroke="#dadada" stroke-width="0.8"/>
<line x1="163" y1="214.5" x2="793" y2="214.5" stroke="#dadada" stroke-width="0.8"/>
<line x1="163" y1="226.5" x2="793" y2="226.5" stroke="#dadada" stroke-width="0.8"/>
<line x1="163" y1="238.5" x2="793" y2="238.5" stroke="#dadada" stroke-width="0.8"/>
<line x1="163" y1="250.5" x2="793" y2="250.5" stroke="#dadada" stroke-width="0.8"/>
<line x1="163" y1="262.5" x2="793" y2="262.5" stroke="#dadada" stroke-width="0.8"/>
<line x1="163" y1="274.5" x2="793" y2="274.5" stroke="#dadada" stroke-width="0.8"/>
<line x1="163" y1="286.5" x2="793" y2="286.5" stroke="#dadada" stroke-width="0.8"/>
<line x1="163" y1="298.5" x2="793" y2="298.5" stroke="#dadada" stroke-width="0.8"/>
<line x1="163" y1="310.5" x2="793" y2="310.5" stroke="#dadada" stroke-width="0.8"/>
<line x1="163" y1="322.5" x2="793" y2="322.5" stroke="#dadada" stroke-width="0.8"/>
<line x1="163" y1="334.5" x2="793" y2="334.5" stroke="#dadada" stroke-width="0.8"/>
<line x1="163" y1="346.5" x2="793" y2="346.5" stroke="#dadada" stroke-width="0.8"/>
<line x1="163" y1="358.5" x2="793" y2="358.5" stroke="#dadada" stroke-width="0.8"/>
<line x1="163" y1="370.5" x2="793" y2="370.5" stroke="#dadada" stroke-width="0.8"/>
<line x1="163" y1="382.5" x2="793" y2="382.5" stroke="#dadada" stroke-width="0.8"/>
<line x1="163" y1="394.5" x2="793" y2="394.5" stroke="#dadada" stroke-width="0.8"/>
<line x1="163" y1="406.5" x2="793" y2="406.5" stroke="#dadada" stroke-width="0.8"/>
<line x1="163" y1="418.5" x2="793" y2="418.5" stroke="#dadada" stroke-width="0.8"/>
<line x1="163" y1="430.5" x2="793" y2="430.5" stroke="#dadada" stroke-width="0.8"/>
<line x1="163" y1="442.5" x2="793" y2="442.5" stroke="#dadada" stroke-width="0.8"/>
<line x1="163" y1="454.5" x2="793" y2="454.5" stroke="#dadada" stroke-width="0.8"/>
<line x1="163" y1="466.5" x2="793" y2="466.5" stroke="#dadada" stroke-width="0.8"/>
<line x1="163" y1="478.5" x2="793" y2="478.5" stroke="#dadada" stroke-width="0.8"/>
<line x1="240.3" y1="95" x2="240.3" y2="478.7" stroke="#dadada" stroke-width="0.9"/>
<line x1="288.25" y1="95" x2="288.25" y2="478.7" stroke="#dadada" stroke-width="0.9"/>
<line x1="336.2" y1="95" x2="336.2" y2="478.7" stroke="#dadada" stroke-width="0.9"/>
<line x1="384.15" y1="95" x2="384.15" y2="478.7" stroke="#dadada" stroke-width="0.9"/>
<line x1="432.1" y1="95" x2="432.1" y2="478.7" stroke="#dadada" stroke-width="0.9"/>
<line x1="480.05" y1="95" x2="480.05" y2="478.7" stroke="#dadada" stroke-width="0.9"/>
<line x1="528" y1="95" x2="528" y2="478.7" stroke="#dadada" stroke-width="0.9"/>
<line x1="575.95" y1="95" x2="575.95" y2="478.7" stroke="#dadada" stroke-width="0.9"/>
<line x1="623.9" y1="95" x2="623.9" y2="478.7" stroke="#dadada" stroke-width="0.9"/>
<line x1="671.85" y1="95" x2="671.85" y2="478.7" stroke="#dadada" stroke-width="0.9"/>
<line x1="719.8" y1="95" x2="719.8" y2="478.7" stroke="#dadada" stroke-width="0.9"/>
<line x1="767.75" y1="95" x2="767.75" y2="478.7" stroke="#dadada" stroke-width="0.9"/>
<text x="164.8" y="105" font-size="9.8" fill="#383838" textLength="27.4" lengthAdjust="spacingAndGlyphs">Equipm</text>
<text x="193.2" y="105" font-size="9.8" fill="#383838">e</text>
<text x="199.2" y="105" font-size="9.8" fill="#383838" textLength="8" lengthAdjust="spacingAndGlyphs">nt</text>
<text x="164.8" y="117" font-size="9.8" fill="#383838" textLength="27.2" lengthAdjust="spacingAndGlyphs">Recipe</text>
<text x="197.2" y="117" font-size="9.8" fill="#383838" textLength="22.6" lengthAdjust="spacingAndGlyphs">Name</text>
<text x="164.8" y="129" font-size="9.8" fill="#383838" textLength="27.2" lengthAdjust="spacingAndGlyphs">Recipe</text>
<text x="196.2" y="129" font-size="9.8" fill="#383838" textLength="40.2" lengthAdjust="spacingAndGlyphs">Comment</text>
<text x="164.8" y="141" font-size="9.8" fill="#383838" textLength="25.8" lengthAdjust="spacingAndGlyphs">Lot ID</text>
<text x="164.4" y="153" font-size="9.8" fill="#383838" textLength="26.4" lengthAdjust="spacingAndGlyphs">StartT</text>
<text x="193.8" y="153" font-size="9.8" fill="#383838" textLength="65.4" lengthAdjust="spacingAndGlyphs">me / EndTime :</text>
<text x="194.2" y="165" font-size="9.8" fill="#383838" textLength="36" lengthAdjust="spacingAndGlyphs">Pressure</text>
<text x="241.8" y="165" font-size="9.8" fill="#383838" textLength="17.2" lengthAdjust="spacingAndGlyphs">Rate</text>
<text x="290.2" y="165" font-size="9.8" fill="#383838" textLength="17.8" lengthAdjust="spacingAndGlyphs">THK</text>
<text x="337.9" y="165" font-size="9.8" fill="#383838" textLength="43" lengthAdjust="spacingAndGlyphs">EMISSION</text>
<text x="185.12" y="177" font-size="9.8" fill="#383838" textLength="5.08" lengthAdjust="spacingAndGlyphs">0</text>
<text x="199.2" y="177" font-size="9.8" fill="#383838" textLength="39" lengthAdjust="spacingAndGlyphs">8.00E+00</text>
<text x="263.18" y="177" font-size="9.8" fill="#383838" textLength="22.82" lengthAdjust="spacingAndGlyphs">4.243</text>
<text x="311.18" y="177" font-size="9.8" fill="#383838" textLength="22.82" lengthAdjust="spacingAndGlyphs">0.004</text>
<text x="369.34" y="177" font-size="9.8" fill="#383838" textLength="12.66" lengthAdjust="spacingAndGlyphs">0.2</text>
<text x="185.12" y="189" font-size="9.8" fill="#383838" textLength="5.08" lengthAdjust="spacingAndGlyphs">2</text>
<text x="199.2" y="189" font-size="9.8" fill="#383838" textLength="39" lengthAdjust="spacingAndGlyphs">2.60E+00</text>
<text x="263.18" y="189" font-size="9.8" fill="#383838" textLength="22.82" lengthAdjust="spacingAndGlyphs">9.346</text>
<text x="311.18" y="189" font-size="9.8" fill="#383838" textLength="22.82" lengthAdjust="spacingAndGlyphs">0.022</text>
<text x="364.26" y="189" font-size="9.8" fill="#383838" textLength="17.74" lengthAdjust="spacingAndGlyphs">0.19</text>
<text x="185.12" y="201" font-size="9.8" fill="#383838" textLength="5.08" lengthAdjust="spacingAndGlyphs">4</text>
<text x="199.2" y="201" font-size="9.8" fill="#383838" textLength="39" lengthAdjust="spacingAndGlyphs">1.90E+00</text>
<text x="263.18" y="201" font-size="9.8" fill="#383838" textLength="22.82" lengthAdjust="spacingAndGlyphs">7.909</text>
<text x="311.18" y="201" font-size="9.8" fill="#383838" textLength="22.82" lengthAdjust="spacingAndGlyphs">0.037</text>
<text x="364.26" y="201" font-size="9.8" fill="#383838" textLength="17.74" lengthAdjust="spacingAndGlyphs">0.19</text>
<text x="185.12" y="213" font-size="9.8" fill="#383838" textLength="5.08" lengthAdjust="spacingAndGlyphs">6</text>
<text x="199.2" y="213" font-size="9.8" fill="#383838" textLength="39" lengthAdjust="spacingAndGlyphs">1.60E+00</text>
<text x="263.18" y="213" font-size="9.8" fill="#383838" textLength="22.82" lengthAdjust="spacingAndGlyphs">8.156</text>
<text x="311.18" y="213" font-size="9.8" fill="#383838" textLength="22.82" lengthAdjust="spacingAndGlyphs">0.054</text>
<text x="364.26" y="213" font-size="9.8" fill="#383838" textLength="17.74" lengthAdjust="spacingAndGlyphs">0.18</text>
<text x="185.12" y="225" font-size="9.8" fill="#383838" textLength="5.08" lengthAdjust="spacingAndGlyphs">8</text>
<text x="199.2" y="225" font-size="9.8" fill="#383838" textLength="39" lengthAdjust="spacingAndGlyphs">1.50E+00</text>
<text x="263.18" y="225" font-size="9.8" fill="#383838" textLength="22.82" lengthAdjust="spacingAndGlyphs">7.978</text>
<text x="316.26" y="225" font-size="9.8" fill="#383838" textLength="17.74" lengthAdjust="spacingAndGlyphs">0.07</text>
<text x="364.26" y="225" font-size="9.8" fill="#383838" textLength="17.74" lengthAdjust="spacingAndGlyphs">0.19</text>
<text x="180.04" y="237" font-size="9.8" fill="#383838" textLength="10.16" lengthAdjust="spacingAndGlyphs">10</text>
<text x="199.2" y="237" font-size="9.8" fill="#383838" textLength="39" lengthAdjust="spacingAndGlyphs">1.30E+00</text>
<text x="263.18" y="237" font-size="9.8" fill="#383838" textLength="22.82" lengthAdjust="spacingAndGlyphs">8.181</text>
<text x="311.18" y="237" font-size="9.8" fill="#383838" textLength="22.82" lengthAdjust="spacingAndGlyphs">0.086</text>
<text x="364.26" y="237" font-size="9.8" fill="#383838" textLength="17.74" lengthAdjust="spacingAndGlyphs">0.18</text>
<text x="180.04" y="249" font-size="9.8" fill="#383838" textLength="10.16" lengthAdjust="spacingAndGlyphs">12</text>
<text x="199.2" y="249" font-size="9.8" fill="#383838" textLength="39" lengthAdjust="spacingAndGlyphs">1.30E+00</text>
<text x="263.18" y="249" font-size="9.8" fill="#383838" textLength="22.82" lengthAdjust="spacingAndGlyphs">7.926</text>
<text x="311.18" y="249" font-size="9.8" fill="#383838" textLength="22.82" lengthAdjust="spacingAndGlyphs">0.102</text>
<text x="364.26" y="249" font-size="9.8" fill="#383838" textLength="17.74" lengthAdjust="spacingAndGlyphs">0.19</text>
<text x="180.04" y="261" font-size="9.8" fill="#383838" textLength="10.16" lengthAdjust="spacingAndGlyphs">14</text>
<text x="199.2" y="261" font-size="9.8" fill="#383838" textLength="39" lengthAdjust="spacingAndGlyphs">1.20E+00</text>
<text x="263.18" y="261" font-size="9.8" fill="#383838" textLength="22.82" lengthAdjust="spacingAndGlyphs">7.991</text>
<text x="311.18" y="261" font-size="9.8" fill="#383838" textLength="22.82" lengthAdjust="spacingAndGlyphs">0.118</text>
<text x="364.26" y="261" font-size="9.8" fill="#383838" textLength="17.74" lengthAdjust="spacingAndGlyphs">0.18</text>
<text x="180.04" y="273" font-size="9.8" fill="#383838" textLength="10.16" lengthAdjust="spacingAndGlyphs">16</text>
<text x="199.2" y="273" font-size="9.8" fill="#383838" textLength="39" lengthAdjust="spacingAndGlyphs">1.20E+00</text>
<text x="268.26" y="273" font-size="9.8" fill="#383838" textLength="17.74" lengthAdjust="spacingAndGlyphs">8.01</text>
<text x="311.18" y="273" font-size="9.8" fill="#383838" textLength="22.82" lengthAdjust="spacingAndGlyphs">0.134</text>
<text x="364.26" y="273" font-size="9.8" fill="#383838" textLength="17.74" lengthAdjust="spacingAndGlyphs">0.18</text>
<text x="180.04" y="285" font-size="9.8" fill="#383838" textLength="10.16" lengthAdjust="spacingAndGlyphs">18</text>
<text x="199.2" y="285" font-size="9.8" fill="#383838" textLength="39" lengthAdjust="spacingAndGlyphs">1.10E+00</text>
<text x="263.18" y="285" font-size="9.8" fill="#383838" textLength="22.82" lengthAdjust="spacingAndGlyphs">7.811</text>
<text x="316.26" y="285" font-size="9.8" fill="#383838" textLength="17.74" lengthAdjust="spacingAndGlyphs">0.15</text>
<text x="364.26" y="285" font-size="9.8" fill="#383838" textLength="17.74" lengthAdjust="spacingAndGlyphs">0.19</text>
<text x="180.04" y="297" font-size="9.8" fill="#383838" textLength="10.16" lengthAdjust="spacingAndGlyphs">20</text>
<text x="199.2" y="297" font-size="9.8" fill="#383838" textLength="39" lengthAdjust="spacingAndGlyphs">1.10E+00</text>
<text x="263.18" y="297" font-size="9.8" fill="#383838" textLength="22.82" lengthAdjust="spacingAndGlyphs">8.059</text>
<text x="311.18" y="297" font-size="9.8" fill="#383838" textLength="22.82" lengthAdjust="spacingAndGlyphs">0.166</text>
<text x="364.26" y="297" font-size="9.8" fill="#383838" textLength="17.74" lengthAdjust="spacingAndGlyphs">0.19</text>
<text x="180.04" y="309" font-size="9.8" fill="#383838" textLength="10.16" lengthAdjust="spacingAndGlyphs">22</text>
<text x="199.2" y="309" font-size="9.8" fill="#383838" textLength="39" lengthAdjust="spacingAndGlyphs">1.00E+00</text>
<text x="263.18" y="309" font-size="9.8" fill="#383838" textLength="22.82" lengthAdjust="spacingAndGlyphs">7.961</text>
<text x="311.18" y="309" font-size="9.8" fill="#383838" textLength="22.82" lengthAdjust="spacingAndGlyphs">0.182</text>
<text x="364.26" y="309" font-size="9.8" fill="#383838" textLength="17.74" lengthAdjust="spacingAndGlyphs">0.18</text>
<text x="180.04" y="321" font-size="9.8" fill="#383838" textLength="10.16" lengthAdjust="spacingAndGlyphs">24</text>
<text x="199.2" y="321" font-size="9.8" fill="#383838" textLength="39" lengthAdjust="spacingAndGlyphs">1.00E+00</text>
<text x="263.18" y="321" font-size="9.8" fill="#383838" textLength="22.82" lengthAdjust="spacingAndGlyphs">7.863</text>
<text x="311.18" y="321" font-size="9.8" fill="#383838" textLength="22.82" lengthAdjust="spacingAndGlyphs">0.198</text>
<text x="364.26" y="321" font-size="9.8" fill="#383838" textLength="17.74" lengthAdjust="spacingAndGlyphs">0.18</text>
<text x="180.04" y="333" font-size="9.8" fill="#383838" textLength="10.16" lengthAdjust="spacingAndGlyphs">26</text>
<text x="199.2" y="333" font-size="9.8" fill="#383838" textLength="39" lengthAdjust="spacingAndGlyphs">1.00E+00</text>
<text x="263.18" y="333" font-size="9.8" fill="#383838" textLength="22.82" lengthAdjust="spacingAndGlyphs">8.181</text>
<text x="311.18" y="333" font-size="9.8" fill="#383838" textLength="22.82" lengthAdjust="spacingAndGlyphs">0.214</text>
<text x="364.26" y="333" font-size="9.8" fill="#383838" textLength="17.74" lengthAdjust="spacingAndGlyphs">0.18</text>
<text x="180.04" y="345" font-size="9.8" fill="#383838" textLength="10.16" lengthAdjust="spacingAndGlyphs">28</text>
<text x="199.2" y="345" font-size="9.8" fill="#383838" textLength="39" lengthAdjust="spacingAndGlyphs">9.80E−01</text>
<text x="263.18" y="345" font-size="9.8" fill="#383838" textLength="22.82" lengthAdjust="spacingAndGlyphs">7.659</text>
<text x="311.18" y="345" font-size="9.8" fill="#383838" textLength="22.82" lengthAdjust="spacingAndGlyphs">0.229</text>
<text x="364.26" y="345" font-size="9.8" fill="#383838" textLength="17.74" lengthAdjust="spacingAndGlyphs">0.19</text>
<text x="180.04" y="357" font-size="9.8" fill="#383838" textLength="10.16" lengthAdjust="spacingAndGlyphs">30</text>
<text x="199.2" y="357" font-size="9.8" fill="#383838" textLength="39" lengthAdjust="spacingAndGlyphs">9.60E−01</text>
<text x="263.18" y="357" font-size="9.8" fill="#383838" textLength="22.82" lengthAdjust="spacingAndGlyphs">8.086</text>
<text x="311.18" y="357" font-size="9.8" fill="#383838" textLength="22.82" lengthAdjust="spacingAndGlyphs">0.246</text>
<text x="364.26" y="357" font-size="9.8" fill="#383838" textLength="17.74" lengthAdjust="spacingAndGlyphs">0.18</text>
<text x="180.04" y="369" font-size="9.8" fill="#383838" textLength="10.16" lengthAdjust="spacingAndGlyphs">32</text>
<text x="199.2" y="369" font-size="9.8" fill="#383838" textLength="39" lengthAdjust="spacingAndGlyphs">9.60E−01</text>
<text x="263.18" y="369" font-size="9.8" fill="#383838" textLength="22.82" lengthAdjust="spacingAndGlyphs">8.101</text>
<text x="311.18" y="369" font-size="9.8" fill="#383838" textLength="22.82" lengthAdjust="spacingAndGlyphs">0.262</text>
<text x="364.26" y="369" font-size="9.8" fill="#383838" textLength="17.74" lengthAdjust="spacingAndGlyphs">0.18</text>
<text x="180.04" y="381" font-size="9.8" fill="#383838" textLength="10.16" lengthAdjust="spacingAndGlyphs">34</text>
<text x="199.2" y="381" font-size="9.8" fill="#383838" textLength="39" lengthAdjust="spacingAndGlyphs">9.40E−01</text>
<text x="263.18" y="381" font-size="9.8" fill="#383838" textLength="22.82" lengthAdjust="spacingAndGlyphs">8.211</text>
<text x="311.18" y="381" font-size="9.8" fill="#383838" textLength="22.82" lengthAdjust="spacingAndGlyphs">0.278</text>
<text x="364.26" y="381" font-size="9.8" fill="#383838" textLength="17.74" lengthAdjust="spacingAndGlyphs">0.18</text>
<text x="180.04" y="393" font-size="9.8" fill="#383838" textLength="10.16" lengthAdjust="spacingAndGlyphs">36</text>
<text x="199.2" y="393" font-size="9.8" fill="#383838" textLength="39" lengthAdjust="spacingAndGlyphs">9.30E−01</text>
<text x="263.18" y="393" font-size="9.8" fill="#383838" textLength="22.82" lengthAdjust="spacingAndGlyphs">8.037</text>
<text x="311.18" y="393" font-size="9.8" fill="#383838" textLength="22.82" lengthAdjust="spacingAndGlyphs">0.294</text>
<text x="364.26" y="393" font-size="9.8" fill="#383838" textLength="17.74" lengthAdjust="spacingAndGlyphs">0.18</text>
<text x="180.04" y="405" font-size="9.8" fill="#383838" textLength="10.16" lengthAdjust="spacingAndGlyphs">38</text>
<text x="199.2" y="405" font-size="9.8" fill="#383838" textLength="39" lengthAdjust="spacingAndGlyphs">9.10E−01</text>
<text x="268.26" y="405" font-size="9.8" fill="#383838" textLength="17.74" lengthAdjust="spacingAndGlyphs">7.81</text>
<text x="316.26" y="405" font-size="9.8" fill="#383838" textLength="17.74" lengthAdjust="spacingAndGlyphs">0.31</text>
<text x="364.26" y="405" font-size="9.8" fill="#383838" textLength="17.74" lengthAdjust="spacingAndGlyphs">0.18</text>
<text x="180.04" y="417" font-size="9.8" fill="#383838" textLength="10.16" lengthAdjust="spacingAndGlyphs">40</text>
<text x="199.2" y="417" font-size="9.8" fill="#383838" textLength="39" lengthAdjust="spacingAndGlyphs">9.00E−01</text>
<text x="263.18" y="417" font-size="9.8" fill="#383838" textLength="22.82" lengthAdjust="spacingAndGlyphs">8.101</text>
<text x="311.18" y="417" font-size="9.8" fill="#383838" textLength="22.82" lengthAdjust="spacingAndGlyphs">0.326</text>
<text x="364.26" y="417" font-size="9.8" fill="#383838" textLength="17.74" lengthAdjust="spacingAndGlyphs">0.18</text>
<text x="180.04" y="429" font-size="9.8" fill="#383838" textLength="10.16" lengthAdjust="spacingAndGlyphs">42</text>
<text x="199.2" y="429" font-size="9.8" fill="#383838" textLength="39" lengthAdjust="spacingAndGlyphs">8.90E−01</text>
<text x="263.18" y="429" font-size="9.8" fill="#383838" textLength="22.82" lengthAdjust="spacingAndGlyphs">7.932</text>
<text x="311.18" y="429" font-size="9.8" fill="#383838" textLength="22.82" lengthAdjust="spacingAndGlyphs">0.342</text>
<text x="364.26" y="429" font-size="9.8" fill="#383838" textLength="17.74" lengthAdjust="spacingAndGlyphs">0.18</text>
<text x="180.04" y="441" font-size="9.8" fill="#383838" textLength="10.16" lengthAdjust="spacingAndGlyphs">44</text>
<text x="199.2" y="441" font-size="9.8" fill="#383838" textLength="39" lengthAdjust="spacingAndGlyphs">8.90E−01</text>
<text x="263.18" y="441" font-size="9.8" fill="#383838" textLength="22.82" lengthAdjust="spacingAndGlyphs">7.978</text>
<text x="311.18" y="441" font-size="9.8" fill="#383838" textLength="22.82" lengthAdjust="spacingAndGlyphs">0.358</text>
<text x="364.26" y="441" font-size="9.8" fill="#383838" textLength="17.74" lengthAdjust="spacingAndGlyphs">0.18</text>
<text x="180.04" y="453" font-size="9.8" fill="#383838" textLength="10.16" lengthAdjust="spacingAndGlyphs">46</text>
<text x="199.2" y="453" font-size="9.8" fill="#383838" textLength="39" lengthAdjust="spacingAndGlyphs">8.80E−01</text>
<text x="263.18" y="453" font-size="9.8" fill="#383838" textLength="22.82" lengthAdjust="spacingAndGlyphs">7.998</text>
<text x="311.18" y="453" font-size="9.8" fill="#383838" textLength="22.82" lengthAdjust="spacingAndGlyphs">0.374</text>
<text x="364.26" y="453" font-size="9.8" fill="#383838" textLength="17.74" lengthAdjust="spacingAndGlyphs">0.18</text>
<text x="180.04" y="465" font-size="9.8" fill="#383838" textLength="10.16" lengthAdjust="spacingAndGlyphs">48</text>
<text x="199.2" y="465" font-size="9.8" fill="#383838" textLength="39" lengthAdjust="spacingAndGlyphs">8.80E−01</text>
<text x="263.18" y="465" font-size="9.8" fill="#383838" textLength="22.82" lengthAdjust="spacingAndGlyphs">7.921</text>
<text x="316.26" y="465" font-size="9.8" fill="#383838" textLength="17.74" lengthAdjust="spacingAndGlyphs">0.39</text>
<text x="364.26" y="465" font-size="9.8" fill="#383838" textLength="17.74" lengthAdjust="spacingAndGlyphs">0.18</text>
<text x="180.04" y="477" font-size="9.8" fill="#383838" textLength="10.16" lengthAdjust="spacingAndGlyphs">50</text>
<text x="199.2" y="477" font-size="9.8" fill="#383838" textLength="39" lengthAdjust="spacingAndGlyphs">8.80E−01</text>
<text x="263.18" y="477" font-size="9.8" fill="#383838" textLength="22.82" lengthAdjust="spacingAndGlyphs">8.074</text>
<text x="311.18" y="477" font-size="9.8" fill="#383838" textLength="22.82" lengthAdjust="spacingAndGlyphs">0.406</text>
<text x="364.26" y="477" font-size="9.8" fill="#383838" textLength="17.74" lengthAdjust="spacingAndGlyphs">0.18</text>
<line x1="162.5" y1="166.9" x2="793" y2="166.9" stroke="#4a4a4a" stroke-width="1"/>
<line x1="140.6" y1="166.6" x2="162.5" y2="166.6" stroke="#55524d" stroke-width="0.9"/>
<line x1="192.4" y1="82.9" x2="192.4" y2="478.7" stroke="#1c1c1c" stroke-width="1.05"/>
<line x1="192.4" y1="94.3" x2="240.6" y2="94.3" stroke="#111" stroke-width="1.2"/>
<rect x="192.9" y="155" width="47.4" height="11.6" fill="none" stroke="#000" stroke-width="1.5"/>
<rect x="239.4" y="165.4" width="2.2" height="2" fill="#000"/>
<rect x="793" y="82.4" width="10.2" height="396.3" fill="url(#dith)"/>
<rect x="793" y="82.8" width="10.2" height="9.6" fill="#d4d0c8"/>
<line x1="793" y1="83.1" x2="803.2" y2="83.1" stroke="#fff" stroke-width="0.6"/>
<line x1="793.3" y1="82.8" x2="793.3" y2="92.4" stroke="#fff" stroke-width="0.6"/>
<line x1="793" y1="92.1" x2="803.2" y2="92.1" stroke="#404040" stroke-width="0.6"/>
<line x1="802.9" y1="82.8" x2="802.9" y2="92.4" stroke="#404040" stroke-width="0.6"/>
<line x1="793.6" y1="91.5" x2="802.6" y2="91.5" stroke="#808080" stroke-width="0.6"/>
<line x1="802.3" y1="83.4" x2="802.3" y2="91.8" stroke="#808080" stroke-width="0.6"/>
<path d="M796.1 88.5L800.1 88.5L798.1 86.3Z" fill="#000"/>
<rect x="793" y="469.2" width="10.2" height="9.4" fill="#d4d0c8"/>
<line x1="793" y1="469.5" x2="803.2" y2="469.5" stroke="#fff" stroke-width="0.6"/>
<line x1="793.3" y1="469.2" x2="793.3" y2="478.6" stroke="#fff" stroke-width="0.6"/>
<line x1="793" y1="478.3" x2="803.2" y2="478.3" stroke="#404040" stroke-width="0.6"/>
<line x1="802.9" y1="469.2" x2="802.9" y2="478.6" stroke="#404040" stroke-width="0.6"/>
<line x1="793.6" y1="477.7" x2="802.6" y2="477.7" stroke="#808080" stroke-width="0.6"/>
<line x1="802.3" y1="469.8" x2="802.3" y2="478" stroke="#808080" stroke-width="0.6"/>
<path d="M796.1 472.9L800.1 472.9L798.1 475.1Z" fill="#000"/>
<rect x="803.2" y="82.4" width="0.8" height="406.1" fill="#d4d0c8"/>
<!-- chart -->
<rect x="384.3" y="167" width="404.2" height="299.6" fill="#fff"/>
<line x1="384.3" y1="166.6" x2="384.3" y2="466.6" stroke="#55524d" stroke-width="0.9"/>
<line x1="788.5" y1="167" x2="788.5" y2="466.6" stroke="#6a6762" stroke-width="0.85"/>
<line x1="384.3" y1="466.6" x2="788.5" y2="466.6" stroke="#6a6762" stroke-width="0.9"/>
<rect x="439.5" y="216.8" width="302.9" height="204.5" fill="#c3c3c6"/>
<path d="M439.5 216.8V421.3M449.15 216.8V421.3M458.8 216.8V421.3M468.46 216.8V421.3M478.11 216.8V421.3M487.76 216.8V421.3M497.41 216.8V421.3M507.06 216.8V421.3M516.72 216.8V421.3M526.37 216.8V421.3M536.02 216.8V421.3M545.67 216.8V421.3M555.32 216.8V421.3M564.98 216.8V421.3M574.63 216.8V421.3M584.28 216.8V421.3M593.93 216.8V421.3M603.58 216.8V421.3M613.24 216.8V421.3M622.89 216.8V421.3M632.54 216.8V421.3M642.19 216.8V421.3M651.84 216.8V421.3M661.5 216.8V421.3M671.15 216.8V421.3M680.8 216.8V421.3M690.45 216.8V421.3M700.1 216.8V421.3M709.76 216.8V421.3M719.41 216.8V421.3M729.06 216.8V421.3M738.71 216.8V421.3M439.5 421.3H742.4M439.5 400.85H742.4M439.5 380.4H742.4M439.5 359.95H742.4M439.5 339.5H742.4M439.5 319.05H742.4M439.5 298.6H742.4M439.5 278.15H742.4M439.5 257.7H742.4M439.5 237.25H742.4M439.5 216.8H742.4" fill="none" stroke="#141414" stroke-width="0.62"/>
<rect x="439.5" y="216.8" width="302.9" height="204.5" fill="none" stroke="#555" stroke-width="0.8"/>
<text x="415" y="424.6" font-size="9.7" fill="#222" textLength="12.6" lengthAdjust="spacingAndGlyphs">0.0</text>
<text x="749.8" y="424.6" font-size="9.7" fill="#222">0</text>
<text x="415" y="404.15" font-size="9.7" fill="#222" textLength="12.6" lengthAdjust="spacingAndGlyphs">1.0</text>
<text x="749.8" y="404.15" font-size="9.7" fill="#222" textLength="11.8" lengthAdjust="spacingAndGlyphs">0.1</text>
<text x="415" y="383.7" font-size="9.7" fill="#222" textLength="12.6" lengthAdjust="spacingAndGlyphs">2.0</text>
<text x="749.8" y="383.7" font-size="9.7" fill="#222" textLength="11.8" lengthAdjust="spacingAndGlyphs">0.2</text>
<text x="415" y="363.25" font-size="9.7" fill="#222" textLength="12.6" lengthAdjust="spacingAndGlyphs">3.0</text>
<text x="749.8" y="363.25" font-size="9.7" fill="#222" textLength="11.8" lengthAdjust="spacingAndGlyphs">0.3</text>
<text x="415" y="342.8" font-size="9.7" fill="#222" textLength="12.6" lengthAdjust="spacingAndGlyphs">4.0</text>
<text x="749.8" y="342.8" font-size="9.7" fill="#222" textLength="11.8" lengthAdjust="spacingAndGlyphs">0.4</text>
<text x="415" y="322.35" font-size="9.7" fill="#222" textLength="12.6" lengthAdjust="spacingAndGlyphs">5.0</text>
<text x="749.8" y="322.35" font-size="9.7" fill="#222" textLength="11.8" lengthAdjust="spacingAndGlyphs">0.5</text>
<text x="415" y="301.9" font-size="9.7" fill="#222" textLength="12.6" lengthAdjust="spacingAndGlyphs">6.0</text>
<text x="749.8" y="301.9" font-size="9.7" fill="#222" textLength="11.8" lengthAdjust="spacingAndGlyphs">0.6</text>
<text x="415" y="281.45" font-size="9.7" fill="#222" textLength="12.6" lengthAdjust="spacingAndGlyphs">7.0</text>
<text x="749.8" y="281.45" font-size="9.7" fill="#222" textLength="11.8" lengthAdjust="spacingAndGlyphs">0.7</text>
<text x="415" y="261" font-size="9.7" fill="#222" textLength="12.6" lengthAdjust="spacingAndGlyphs">8.0</text>
<text x="749.8" y="261" font-size="9.7" fill="#222" textLength="11.8" lengthAdjust="spacingAndGlyphs">0.8</text>
<text x="415" y="240.55" font-size="9.7" fill="#222" textLength="12.6" lengthAdjust="spacingAndGlyphs">9.0</text>
<text x="749.8" y="240.55" font-size="9.7" fill="#222" textLength="11.8" lengthAdjust="spacingAndGlyphs">0.9</text>
<text x="410" y="220.1" font-size="9.7" fill="#222" textLength="17.6" lengthAdjust="spacingAndGlyphs">10.0</text>
<text x="749.8" y="220.1" font-size="9.7" fill="#222">1</text>
<text x="439.5" y="439.4" font-size="9.7" fill="#222" text-anchor="middle">0</text>
<text x="528.72" y="439.4" font-size="9.7" fill="#222" textLength="14.6" lengthAdjust="spacingAndGlyphs">200</text>
<text x="625.24" y="439.4" font-size="9.7" fill="#222" textLength="14.6" lengthAdjust="spacingAndGlyphs">400</text>
<text x="721.76" y="439.4" font-size="9.7" fill="#222" textLength="14.6" lengthAdjust="spacingAndGlyphs">600</text>
<text x="521.9" y="453.6" font-size="9.7" fill="#222" textLength="137.4" lengthAdjust="spacingAndGlyphs">Time start from deposition [sec]</text>
<g transform="translate(398.2 313.8) rotate(-90)">
<text x="-65.3" y="0" font-size="9.7" fill="#222" textLength="130.6" lengthAdjust="spacingAndGlyphs">Pressure[×10−4[Pa], Rate[A/s],</text>
</g>
<g transform="translate(409.8 317.6) rotate(-90)">
<text x="-16.5" y="0" font-size="9.7" fill="#222" textLength="33" lengthAdjust="spacingAndGlyphs">Thk[kA]</text>
</g>
<g transform="translate(775.2 318.7) rotate(-90)">
<text x="-43.2" y="0" font-size="9.7" fill="#222" textLength="86.4" lengthAdjust="spacingAndGlyphs">Emission Current[A]</text>
</g>
<clipPath id="pc"><rect x="438.3" y="216.8" width="305.3" height="205.5"/></clipPath><g clip-path="url(#pc)">
<path d="M439.5 257.7L440.47 368.13L441.43 382.44L442.4 388.58L443.36 390.62L444.33 394.72L445.29 395.74L446.26 396.76L447.22 397.78L448.19 398.81L449.15 399.49L450.12 400.17L451.08 400.85L452.05 401.1L453.01 401.34L453.98 401.59L454.94 401.83L455.91 402.08L456.87 402.23L457.84 402.38L458.8 402.54L459.77 402.69L460.73 402.84L461.7 403L462.66 403.15L463.63 403.3L464.6 403.2L465.56 403.1L466.53 403L467.49 402.89L468.46 402.79L469.42 402.69L470.39 402.59L471.35 402.49L472.32 402.38L473.28 402.28L474.25 402.15L475.21 402.01L476.18 401.87L477.14 401.74L478.11 401.6L479.07 401.46L480.04 401.33L481 401.19L481.97 401.05L482.93 400.92L483.9 400.78L484.86 400.65L485.83 400.51L486.79 400.37L487.76 400.24L488.73 400.23L489.69 400.22L490.66 400.21L491.62 400.2L492.59 400.19L493.55 400.18L494.52 400.16L495.48 400.15L496.45 400.14L497.41 400.13L498.38 400.12L499.34 400.11L500.31 400.1L501.27 400.09L502.24 400.08L503.2 400.07L504.17 400.06L505.13 400.05L506.1 400.04L507.06 400.03L508.03 400.11L508.99 400.2L509.96 400.28L510.92 400.36L511.89 400.44L512.86 400.52L513.82 400.6L514.79 400.69L515.75 400.77L516.72 400.85L517.68 400.93L518.65 401.01L519.61 401.1L520.58 401.18L521.54 401.26L522.51 401.37L523.47 401.48L524.44 401.59L525.4 401.7L526.37 401.8L527.33 401.91L528.3 402.02L529.26 402.13L530.23 402.24L531.19 402.35L532.16 402.46L533.12 402.57L534.09 402.68L535.05 402.79L536.02 402.89L536.99 402.99L537.95 403.09L538.92 403.19L539.88 403.29L540.85 403.39L541.81 403.48L542.78 403.58L543.74 403.68L544.71 403.78L545.67 403.88L546.64 403.97L547.6 404.07L548.57 404.17L549.53 404.27L550.5 404.37L551.46 404.47L552.43 404.56L553.39 404.66L554.36 404.76L555.32 404.86L556.29 404.96L557.25 405.05L558.22 405.15L559.18 405.25L560.15 405.35L561.12 405.41L562.08 405.46L563.05 405.52L564.01 405.58L564.98 405.64L565.94 405.69L566.91 405.75L567.87 405.81L568.84 405.86L569.8 405.92L570.77 405.98L571.73 406.04L572.7 406.09L573.66 406.15L574.63 406.21L575.59 406.27L576.56 406.32L577.52 406.38L578.49 406.44L579.45 406.49L580.42 406.55L581.38 406.61L582.35 406.67L583.31 406.72L584.28 406.78L585.25 406.79L586.21 406.81L587.18 406.82L588.14 406.84L589.11 406.85L590.07 406.86L591.04 406.88L592 406.89L592.97 406.9L593.93 406.92L594.9 406.93L595.86 406.94L596.83 406.96L597.79 406.97L598.76 406.99L599.72 407L600.69 407.01L601.65 407.03L602.62 407.04L603.58 407.05L604.55 407.07L605.51 407.08L606.48 407.09L607.44 407.11L608.41 407.12L609.38 407.13L610.34 407.15L611.31 407.16L612.27 407.18L613.24 407.19L614.2 407.19L615.17 407.19L616.13 407.19L617.1 407.19L618.06 407.19L619.03 407.19L619.99 407.19L620.96 407.19L621.92 407.19L622.89 407.19L623.85 407.19L624.82 407.19L625.78 407.19L626.75 407.19L627.71 407.19L628.68 407.19L629.64 407.19L630.61 407.19L631.57 407.19L632.54 407.19L633.51 407.19L634.47 407.19L635.44 407.19L636.4 407.19L637.37 407.19L638.33 407.19L639.3 407.19L640.26 407.19L641.23 407.19L642.19 407.19L643.16 407.19L644.12 407.19L645.09 407.19L646.05 407.19L647.02 407.19L647.98 407.19L648.95 407.19L649.91 407.19L650.88 407.19L651.84 407.19L652.81 407.18L653.77 407.16L654.74 407.15L655.7 407.13L656.67 407.12L657.64 407.11L658.6 407.09L659.57 407.08L660.53 407.07L661.5 407.05L662.46 407.04L663.43 407.03L664.39 407.01L665.36 407L666.32 406.99L667.29 406.97L668.25 406.96L669.22 406.94L670.18 406.93L671.15 406.92L672.11 406.9L673.08 406.89L674.04 406.88L675.01 406.86L675.97 406.85L676.94 406.84L677.9 406.82L678.87 406.81L679.83 406.79L680.8 406.78L681.77 406.73L682.73 406.68L683.7 406.63L684.66 406.58L685.63 406.52L686.59 406.47L687.56 406.42L688.52 406.37L689.49 406.32L690.45 406.27L691.42 406.22L692.38 406.17L693.35 406.12L694.31 406.06L695.28 406.01L696.24 405.96L697.21 405.91L698.17 405.86L699.14 405.81L700.1 405.76L701.07 405.7L702.03 405.64L703 405.57L703.96 405.51L704.93 405.45L705.9 405.39L706.86 405.33L707.83 405.27L708.79 405.21L709.76 405.14L710.72 405.08L711.69 405.02L712.65 404.96L713.62 404.9L714.58 404.84L715.55 404.78L716.51 404.72L717.48 404.65L718.44 404.59L719.41 404.53L720.37 404.48L721.34 404.42L722.3 404.37L723.27 404.31L724.23 404.26L725.2 404.2L726.16 404.15L727.13 404.09L728.09 404.04L729.06 403.99L730.03 403.93L730.99 403.88L731.96 403.82L732.92 403.77L733.89 403.71L734.85 403.69L735.82 403.67L736.78 403.64L737.75 403.62L738.71 403.6L739.68 403.58L740.64 403.55L741.61 403.53" fill="none" stroke="#ff10ff" stroke-width="1.25" stroke-linejoin="round"/>
<path d="M439.5 380.4L440.47 382.24L441.43 382.65L442.4 383.47L443.36 382.65L444.33 382.65L445.29 383.88L446.26 382.65L447.22 382.24L448.19 383.06L449.15 382.65L450.12 383.88L451.08 382.65L452.05 382.65L453.01 382.65L453.98 383.47L454.94 383.47L455.91 382.65L456.87 382.65L457.84 382.65L458.8 383.88L459.77 383.47L460.73 382.65L461.7 383.06L462.66 382.65L463.63 382.65L464.6 383.06L465.56 382.65L466.53 383.06L467.49 383.06L468.46 383.47L469.42 382.65L470.39 382.65L471.35 382.65L472.32 383.88L473.28 382.65L474.25 382.65L475.21 383.47L476.18 382.65L477.14 383.88L478.11 382.65L479.07 383.06L480.04 382.65L481 383.88L481.97 382.65L482.93 382.65L483.9 383.06L484.86 383.06L485.83 382.65L486.79 382.24L487.76 382.65L488.73 383.88L489.69 382.65L490.66 383.06L491.62 382.65L492.59 383.06L493.55 382.65L494.52 382.04L495.48 383.88L496.45 383.47L497.41 382.24L498.38 382.04L499.34 383.06L500.31 382.04L501.27 382.24L502.24 382.65L503.2 382.65L504.17 382.65L505.13 382.65L506.1 382.65L507.06 383.06L508.03 382.65L508.99 383.88L509.96 382.04L510.92 382.24L511.89 382.04L512.86 382.65L513.82 383.06L514.79 382.65L515.75 382.65L516.72 383.88L517.68 383.47L518.65 382.65L519.61 382.24L520.58 382.65L521.54 382.04L522.51 383.47L523.47 382.65L524.44 382.65L525.4 383.88L526.37 383.06L527.33 382.24L528.3 382.24L529.26 382.24L530.23 383.06L531.19 382.04L532.16 383.06L533.12 382.04L534.09 382.65L535.05 382.65L536.02 382.65L536.99 382.04L537.95 382.65L538.92 382.65L539.88 382.65L540.85 383.06L541.81 382.04L542.78 382.65L543.74 383.47L544.71 382.24L545.67 382.65L546.64 382.04L547.6 382.24L548.57 382.65L549.53 383.06L550.5 382.65L551.46 382.04L552.43 382.65L553.39 382.65L554.36 382.65L555.32 382.65L556.29 382.65L557.25 383.47L558.22 383.47L559.18 382.04L560.15 382.65L561.12 382.65L562.08 382.04L563.05 383.47L564.01 383.88L564.98 382.65L565.94 382.65L566.91 383.47L567.87 383.88L568.84 382.65L569.8 383.47L570.77 382.24L571.73 383.47L572.7 382.65L573.66 382.65L574.63 382.65L575.59 382.65L576.56 382.65L577.52 382.65L578.49 382.65L579.45 382.65L580.42 382.04L581.38 383.06L582.35 382.65L583.31 382.65L584.28 382.65L585.25 382.65L586.21 382.65L587.18 383.47L588.14 383.88L589.11 382.24L590.07 383.06L591.04 383.06L592 382.24L592.97 382.65L593.93 383.88L594.9 383.06L595.86 382.65L596.83 382.04L597.79 383.88L598.76 383.47L599.72 382.14L600.69 382.14L601.65 382.14L602.62 382.14L603.58 382.14L604.55 382.14L605.51 382.14L606.48 382.14L607.44 382.14L608.41 382.14L609.38 382.14L610.34 381.32L611.31 382.14L612.27 381.32L613.24 382.14L614.2 382.14L615.17 382.14L616.13 382.14L617.1 381.73L618.06 381.73L619.03 382.14L619.99 382.14L620.96 382.14L621.92 381.73L622.89 382.75L623.85 382.14L624.82 382.14L625.78 382.75L626.75 382.75L627.71 382.14L628.68 382.75L629.64 382.14L630.61 382.14L631.57 382.75L632.54 382.14L633.51 381.32L634.47 382.14L635.44 382.14L636.4 382.75L637.37 382.14L638.33 382.14L639.3 381.73L640.26 382.14L641.23 382.14L642.19 382.14L643.16 382.14L644.12 382.14L645.09 381.73L646.05 382.14L647.02 381.73L647.98 381.32L648.95 381.73L649.91 382.14L650.88 382.14L651.84 381.73L652.81 382.14L653.77 382.14L654.74 381.73L655.7 382.14L656.67 382.14L657.64 382.14L658.6 381.32L659.57 382.14L660.53 381.32L661.5 382.14L662.46 382.75L663.43 382.14L664.39 382.14L665.36 382.75L666.32 382.14L667.29 382.14L668.25 382.14L669.22 382.14L670.18 382.14L671.15 382.14L672.11 382.75L673.08 382.14L674.04 382.14L675.01 381.32L675.97 382.14L676.94 382.14L677.9 382.14L678.87 382.75L679.83 381.73L680.8 381.32L681.77 382.14L682.73 382.14L683.7 381.32L684.66 382.75L685.63 382.14L686.59 382.75L687.56 381.73L688.52 382.75L689.49 382.14L690.45 382.14L691.42 382.14L692.38 381.73L693.35 382.14L694.31 381.73L695.28 381.32L696.24 381.32L697.21 382.14L698.17 381.73L699.14 382.75L700.1 382.75L701.07 382.75L702.03 382.75L703 381.73L703.96 382.14L704.93 382.14L705.9 382.14L706.86 382.14L707.83 382.14L708.79 382.14L709.76 382.14L710.72 382.14L711.69 382.14L712.65 382.14L713.62 382.14L714.58 382.14L715.55 382.14L716.51 382.75L717.48 382.14L718.44 382.14L719.41 382.14L720.37 382.14L721.34 382.14L722.3 381.73L723.27 382.14L724.23 382.14L725.2 381.32L726.16 382.75L727.13 382.14L728.09 382.14L729.06 382.14L730.03 382.14L730.99 382.14L731.96 382.14L732.92 382.14L733.89 382.75L734.85 381.32L735.82 382.14L736.78 382.14L737.75 382.14L738.71 382.14L739.68 382.14L740.64 382.14L741.61 381.32" fill="none" stroke="#10f010" stroke-width="1.4" stroke-linejoin="round"/>
<path d="M439.5 421.3L742.38 318.64" fill="none" stroke="#800080" stroke-width="1.15" stroke-linejoin="round"/>
<path d="M439.5 334.53L440.47 230.17L441.43 257.35L442.4 258.15L443.36 258.73L444.33 256.05L445.29 256.41L446.26 256.34L447.22 257.44L448.19 257.28L449.15 258.58L450.12 255.26L451.08 262.3L452.05 263.81L453.01 258.64L453.98 258.01L454.94 255.47L455.91 255.94L456.87 256.92L457.84 259.02L458.8 256.3L459.77 257.85L460.73 258.73L461.7 255.28L462.66 255.42L463.63 256.62L464.6 255.16L465.56 256.21L466.53 257.93L467.49 256.58L468.46 256.79L469.42 256.31L470.39 255.8L471.35 258.03L472.32 264.03L473.28 256.36L474.25 258.73L475.21 263L476.18 260.58L477.14 256.87L478.11 257.48L479.07 255.68L480.04 259.04L481 259.73L481.97 259.74L482.93 253.76L483.9 257.99L484.86 258.06L485.83 259.44L486.79 259.49L487.76 259.5L488.73 257.97L489.69 256.76L490.66 259.5L491.62 262.78L492.59 258.74L493.55 255.4L494.52 255.91L495.48 259.33L496.45 267.03L497.41 257.72L498.38 259.51L499.34 255.41L500.31 252.54L501.27 257.83L502.24 258.73L503.2 259.21L504.17 257.64L505.13 257.47L506.1 256.14L507.06 257.76L508.03 255.17L508.99 257.16L509.96 257.66L510.92 258.52L511.89 259.85L512.86 259.38L513.82 257.32L514.79 256.37L515.75 259.83L516.72 255.99L517.68 261.34L518.65 256.78L519.61 254.12L520.58 256.52L521.54 256.25L522.51 256.92L523.47 259.35L524.44 257.32L525.4 258.55L526.37 259.38L527.33 257.61L528.3 258.44L529.26 264.06L530.23 257.29L531.19 258.36L532.16 256.67L533.12 258.44L534.09 255.65L535.05 257.72L536.02 257.78L536.99 257.22L537.95 258.5L538.92 254.2L539.88 258.69L540.85 257.77L541.81 255.61L542.78 259.56L543.74 255.9L544.71 265.79L545.67 260.14L546.64 256.92L547.6 254.36L548.57 256.64L549.53 258.42L550.5 256.63L551.46 257.84L552.43 255.46L553.39 258.43L554.36 257.13L555.32 256.21L556.29 258.7L557.25 256.02L558.22 257.74L559.18 256.52L560.15 256.94L561.12 257.8L562.08 255.71L563.05 259.05L564.01 256.87L564.98 257.99L565.94 257.23L566.91 256.42L567.87 256.41L568.84 257.44L569.8 256.51L570.77 261.29L571.73 256.43L572.7 257.31L573.66 257.65L574.63 265.56L575.59 257.36L576.56 256.32L577.52 260.38L578.49 257.01L579.45 257.14L580.42 255.41L581.38 258.58L582.35 267.18L583.31 257.19L584.28 255.76L585.25 258.77L586.21 257.72L587.18 255.52L588.14 256.01L589.11 256.9L590.07 262.8L591.04 255.65L592 255.57L592.97 258.26L593.93 257.59L594.9 256.55L595.86 257.81L596.83 257.4L597.79 258.74L598.76 257.13L599.72 257.64L600.69 257.3L601.65 258.12L602.62 258.63L603.58 258.74L604.55 257.73L605.51 257.23L606.48 258.71L607.44 258.75L608.41 254.07L609.38 257.43L610.34 256.13L611.31 256.77L612.27 256.48L613.24 252.71L614.2 257.31L615.17 255.85L616.13 259.36L617.1 258.17L618.06 256.84L619.03 255.48L619.99 257.25L620.96 263.51L621.92 256.89L622.89 256.94L623.85 257.92L624.82 259.47L625.78 255.47L626.75 256.05L627.71 257.17L628.68 257.19L629.64 262.27L630.61 260.96L631.57 253.29L632.54 257.81L633.51 255.16L634.47 258.24L635.44 253.88L636.4 257.98L637.37 266.5L638.33 255.82L639.3 263.93L640.26 261.5L641.23 257.1L642.19 257.71L643.16 256.07L644.12 256.57L645.09 255.18L646.05 257.4L647.02 259.78L647.98 255.56L648.95 255.66L649.91 264.27L650.88 257.14L651.84 254.54L652.81 258.09L653.77 257.1L654.74 257.35L655.7 258.76L656.67 257.33L657.64 258.87L658.6 259.96L659.57 255.57L660.53 255.67L661.5 259.45L662.46 255.9L663.43 257.67L664.39 256.82L665.36 258.41L666.32 256.33L667.29 257.37L668.25 254.93L669.22 256.31L670.18 256.66L671.15 257.32L672.11 257.93L673.08 256.17L674.04 253.87L675.01 259.84L675.97 255.49L676.94 257.06L677.9 261.35L678.87 258.48L679.83 258.44L680.8 257.36L681.77 256.57L682.73 257.63L683.7 257.48L684.66 257.17L685.63 256.48L686.59 258.23L687.56 257.86L688.52 259.78L689.49 258.38L690.45 258.23L691.42 259.18L692.38 256.43L693.35 258.08L694.31 260.35L695.28 256.16L696.24 256.89L697.21 263.51L698.17 260.22L699.14 256.39L700.1 265.16L701.07 257.48L702.03 257.14L703 258.06L703.96 258.56L704.93 257.72L705.9 257.04L706.86 258.03L707.83 256.7L708.79 257.91L709.76 249.1L710.72 257.97L711.69 255.94L712.65 258.91L713.62 257.46L714.58 258.76L715.55 257.23L716.51 258.56L717.48 259.2L718.44 257.87L719.41 264.83L720.37 260.93L721.34 254.86L722.3 257.01L723.27 259.75L724.23 258.37L725.2 259.1L726.16 258.5L727.13 258.01L728.09 257.57L729.06 257.46L730.03 255.11L730.99 256.96L731.96 256.13L732.92 258.31L733.89 257.42L734.85 249.52L735.82 257.15L736.78 258.21L737.75 257.74L738.71 256.91L739.68 257.95L740.64 258.02L741.61 257.7" fill="none" stroke="#000090" stroke-width="1.5" stroke-linejoin="round"/>
<line x1="439.9" y1="231.12" x2="439.9" y2="335.41" stroke="#000090" stroke-width="1.9"/>
<line x1="742.2" y1="257.29" x2="742.2" y2="288.38" stroke="#000090" stroke-width="1.6"/>
</g>
<rect x="456.3" y="273.4" width="63.6" height="53.2" fill="#fff"/>
<line x1="459.2" y1="281.2" x2="477.8" y2="281.2" stroke="#ff10ff" stroke-width="1.2"/>
<text x="480.2" y="284.3" font-size="9.7" fill="#222" textLength="36" lengthAdjust="spacingAndGlyphs">Pressure</text>
<line x1="459.2" y1="294.4" x2="477.8" y2="294.4" stroke="#000090" stroke-width="1"/>
<text x="480.2" y="297.4" font-size="9.7" fill="#222" textLength="17.6" lengthAdjust="spacingAndGlyphs">Rate</text>
<rect x="454.9" y="294.9" width="63.9" height="35.9" fill="#fff"/>
<text x="468.8" y="320" font-size="16.5" fill="#111" font-weight="bold" font-family="&quot;Liberation Serif&quot;, &quot;Noto Serif CJK SC&quot;, serif">图</text>
<text x="489.2" y="320" font-size="16.5" fill="#111" font-weight="bold" font-family="&quot;Liberation Serif&quot;, &quot;Noto Serif CJK SC&quot;, serif">表</text>
<!-- bottom: tabs + hscroll -->
<rect x="140.6" y="478.7" width="662.6" height="9.8" fill="#d4d0c8"/>
<line x1="140.6" y1="478.7" x2="534" y2="478.7" stroke="#222" stroke-width="0.8"/>
<rect x="141.4" y="479.2" width="9.8" height="9.2" fill="#d4d0c8"/>
<line x1="141.4" y1="479.45" x2="151.2" y2="479.45" stroke="#fff" stroke-width="0.5"/>
<line x1="141.65" y1="479.2" x2="141.65" y2="488.4" stroke="#fff" stroke-width="0.5"/>
<line x1="141.4" y1="488.15" x2="151.2" y2="488.15" stroke="#404040" stroke-width="0.5"/>
<line x1="150.95" y1="479.2" x2="150.95" y2="488.4" stroke="#404040" stroke-width="0.5"/>
<line x1="141.9" y1="487.65" x2="150.7" y2="487.65" stroke="#808080" stroke-width="0.5"/>
<line x1="150.45" y1="479.7" x2="150.45" y2="487.9" stroke="#808080" stroke-width="0.5"/>
<path d="M148.1 481.6L148.1 486L145.7 483.8Z" fill="#000"/>
<line x1="144.7" y1="481.6" x2="144.7" y2="486" stroke="#000" stroke-width="0.9"/>
<rect x="151.4" y="479.2" width="9.8" height="9.2" fill="#d4d0c8"/>
<line x1="151.4" y1="479.45" x2="161.2" y2="479.45" stroke="#fff" stroke-width="0.5"/>
<line x1="151.65" y1="479.2" x2="151.65" y2="488.4" stroke="#fff" stroke-width="0.5"/>
<line x1="151.4" y1="488.15" x2="161.2" y2="488.15" stroke="#404040" stroke-width="0.5"/>
<line x1="160.95" y1="479.2" x2="160.95" y2="488.4" stroke="#404040" stroke-width="0.5"/>
<line x1="151.9" y1="487.65" x2="160.7" y2="487.65" stroke="#808080" stroke-width="0.5"/>
<line x1="160.45" y1="479.7" x2="160.45" y2="487.9" stroke="#808080" stroke-width="0.5"/>
<path d="M157.5 481.6L157.5 486L155.1 483.8Z" fill="#000"/>
<rect x="161.4" y="479.2" width="9.8" height="9.2" fill="#d4d0c8"/>
<line x1="161.4" y1="479.45" x2="171.2" y2="479.45" stroke="#fff" stroke-width="0.5"/>
<line x1="161.65" y1="479.2" x2="161.65" y2="488.4" stroke="#fff" stroke-width="0.5"/>
<line x1="161.4" y1="488.15" x2="171.2" y2="488.15" stroke="#404040" stroke-width="0.5"/>
<line x1="170.95" y1="479.2" x2="170.95" y2="488.4" stroke="#404040" stroke-width="0.5"/>
<line x1="161.9" y1="487.65" x2="170.7" y2="487.65" stroke="#808080" stroke-width="0.5"/>
<line x1="170.45" y1="479.7" x2="170.45" y2="487.9" stroke="#808080" stroke-width="0.5"/>
<path d="M165.1 481.6L165.1 486L167.5 483.8Z" fill="#000"/>
<rect x="171.4" y="479.2" width="9.8" height="9.2" fill="#d4d0c8"/>
<line x1="171.4" y1="479.45" x2="181.2" y2="479.45" stroke="#fff" stroke-width="0.5"/>
<line x1="171.65" y1="479.2" x2="171.65" y2="488.4" stroke="#fff" stroke-width="0.5"/>
<line x1="171.4" y1="488.15" x2="181.2" y2="488.15" stroke="#404040" stroke-width="0.5"/>
<line x1="180.95" y1="479.2" x2="180.95" y2="488.4" stroke="#404040" stroke-width="0.5"/>
<line x1="171.9" y1="487.65" x2="180.7" y2="487.65" stroke="#808080" stroke-width="0.5"/>
<line x1="180.45" y1="479.7" x2="180.45" y2="487.9" stroke="#808080" stroke-width="0.5"/>
<path d="M174.5 481.6L174.5 486L176.9 483.8Z" fill="#000"/>
<line x1="177.9" y1="481.6" x2="177.9" y2="486" stroke="#000" stroke-width="0.9"/>
<path d="M181.6 478.7L186.6 487.9H280.4L284.4 478.7Z" fill="#fff" stroke="#222" stroke-width="0.8"/>
<rect x="182.4" y="478.2" width="101.4" height="1" fill="#fff"/>
<text x="187.6" y="486.6" font-size="8.6" fill="#333" textLength="91" lengthAdjust="spacingAndGlyphs">2005−0831−2013 083105</text>
<line x1="534.3" y1="479.3" x2="534.3" y2="488.5" stroke="#fff" stroke-width="0.8"/>
<line x1="535.1" y1="479.3" x2="535.1" y2="488.5" stroke="#55524d" stroke-width="0.8"/>
<rect x="536" y="479.1" width="246.6" height="9.4" fill="#d4d0c8"/>
<rect x="536" y="479.2" width="8.6" height="9" fill="#d4d0c8"/>
<line x1="536" y1="479.45" x2="544.6" y2="479.45" stroke="#fff" stroke-width="0.5"/>
<line x1="536.25" y1="479.2" x2="536.25" y2="488.2" stroke="#fff" stroke-width="0.5"/>
<line x1="536" y1="487.95" x2="544.6" y2="487.95" stroke="#404040" stroke-width="0.5"/>
<line x1="544.35" y1="479.2" x2="544.35" y2="488.2" stroke="#404040" stroke-width="0.5"/>
<line x1="536.5" y1="487.45" x2="544.1" y2="487.45" stroke="#808080" stroke-width="0.5"/>
<line x1="543.85" y1="479.7" x2="543.85" y2="487.7" stroke="#808080" stroke-width="0.5"/>
<path d="M541.4 481.6L541.4 486L539 483.8Z" fill="#000"/>
<rect x="545" y="479.3" width="13.4" height="9" fill="url(#dith)"/>
<rect x="558.4" y="479.2" width="211.6" height="9" fill="#d4d0c8"/>
<line x1="558.4" y1="479.45" x2="770" y2="479.45" stroke="#fff" stroke-width="0.5"/>
<line x1="558.65" y1="479.2" x2="558.65" y2="488.2" stroke="#fff" stroke-width="0.5"/>
<line x1="558.4" y1="487.95" x2="770" y2="487.95" stroke="#404040" stroke-width="0.5"/>
<line x1="769.75" y1="479.2" x2="769.75" y2="488.2" stroke="#404040" stroke-width="0.5"/>
<line x1="558.9" y1="487.45" x2="769.5" y2="487.45" stroke="#808080" stroke-width="0.5"/>
<line x1="769.25" y1="479.7" x2="769.25" y2="487.7" stroke="#808080" stroke-width="0.5"/>
<rect x="770" y="479.3" width="12.8" height="9" fill="url(#dith)"/>
<rect x="783.2" y="479.2" width="8.8" height="9" fill="#d4d0c8"/>
<line x1="783.2" y1="479.45" x2="792" y2="479.45" stroke="#fff" stroke-width="0.5"/>
<line x1="783.45" y1="479.2" x2="783.45" y2="488.2" stroke="#fff" stroke-width="0.5"/>
<line x1="783.2" y1="487.95" x2="792" y2="487.95" stroke="#404040" stroke-width="0.5"/>
<line x1="791.75" y1="479.2" x2="791.75" y2="488.2" stroke="#404040" stroke-width="0.5"/>
<line x1="783.7" y1="487.45" x2="791.5" y2="487.45" stroke="#808080" stroke-width="0.5"/>
<line x1="791.25" y1="479.7" x2="791.25" y2="487.7" stroke="#808080" stroke-width="0.5"/>
<path d="M786.6 481.6L786.6 486L789 483.8Z" fill="#000"/>
<rect x="792.4" y="479.2" width="10.8" height="9.3" fill="#d4d0c8"/>
<line x1="792.4" y1="479.5" x2="803" y2="479.5" stroke="#55524d" stroke-width="0.8"/>
<line x1="792.7" y1="479.2" x2="792.7" y2="488.5" stroke="#3a3a3a" stroke-width="0.9"/>
<!-- left control toolbox icons -->
<path d="M125 98.6l8.6 0l-8.6 -8.6z" fill="#38b8c8" stroke="#124" stroke-width="0.8"/>
<path d="M127 96.6l3.4 0l-3.4 -3.4z" fill="#d4d0c8" stroke="#124" stroke-width="0.5"/>
<path d="M131.2 93.4l3.6 -4.6l1.4 1l-3.4 4.8l-1.8 0.6z" fill="#e8c020" stroke="#222" stroke-width="0.5"/>
<line x1="124.6" y1="99.6" x2="135.4" y2="99.6" stroke="#2838a0" stroke-width="1.2"/>
<rect x="125" y="107.6" width="8.6" height="6.6" fill="#fff" stroke="#333" stroke-width="0.8"/>
<rect x="125" y="107.6" width="8.6" height="1.6" fill="#333"/>
<path d="M128.4 106.2l3 -2.2l2.4 1.4" fill="none" stroke="#333" stroke-width="0.9"/>
<rect x="126.4" y="110.4" width="2.4" height="2.6" fill="#666"/>
<rect x="130" y="110.4" width="2.4" height="2.6" fill="#666"/>
<rect x="134.6" y="104.6" width="1.2" height="3" fill="#2030c0"/>
<rect x="127.6" y="118.6" width="8.6" height="6.2" fill="#fff" stroke="#333" stroke-width="0.8"/>
<circle cx="127.4" cy="123.6" r="2.4" fill="#e8f4f8" stroke="#333" stroke-width="0.8"/>
<line x1="129" y1="125.4" x2="131.6" y2="128" stroke="#333" stroke-width="1.2"/>
<line x1="130" y1="120.8" x2="134.4" y2="120.8" stroke="#2030c0" stroke-width="0.7"/>
<line x1="129.2" y1="126" x2="131" y2="127.6" stroke="#d8c020" stroke-width="0.8"/>
<line x1="125" y1="133.2" x2="137.5" y2="133.2" stroke="#8f8c85" stroke-width="0.6"/>
<line x1="125" y1="133.9" x2="137.5" y2="133.9" stroke="#fff" stroke-width="0.6"/>
<rect x="125.8" y="137.8" width="8" height="8" fill="#fff" stroke="#444" stroke-width="1"/>
<path d="M127.4 141.6l1.8 2.2l3.2 -4.2" fill="none" stroke="#000" stroke-width="1.3"/>
<rect x="125" y="153" width="10.4" height="7.2" fill="#fff" stroke="#555" stroke-width="0.7"/>
<text x="125.6" y="158.8" font-size="5.4" fill="#111" textLength="8.8" lengthAdjust="spacingAndGlyphs" font-weight="bold">abl</text>
<rect x="125" y="168.6" width="10.4" height="6.4" fill="#d4d0c8"/>
<line x1="125" y1="168.9" x2="135.4" y2="168.9" stroke="#fff" stroke-width="0.6"/>
<line x1="125.3" y1="168.6" x2="125.3" y2="175" stroke="#fff" stroke-width="0.6"/>
<line x1="125" y1="174.7" x2="135.4" y2="174.7" stroke="#404040" stroke-width="0.6"/>
<line x1="135.1" y1="168.6" x2="135.1" y2="175" stroke="#404040" stroke-width="0.6"/>
<line x1="125.6" y1="174.1" x2="134.8" y2="174.1" stroke="#808080" stroke-width="0.6"/>
<line x1="134.5" y1="169.2" x2="134.5" y2="174.4" stroke="#808080" stroke-width="0.6"/>
<circle cx="130.2" cy="186.2" r="3.6" fill="#fff" stroke="#666" stroke-width="0.9"/><circle cx="130.2" cy="186.2" r="1.5" fill="#000"/>
<rect x="125" y="197.8" width="10.6" height="7.6" fill="#fff" stroke="#444" stroke-width="0.8"/>
<rect x="125.6" y="198.4" width="6.6" height="2.2" fill="#223"/>
<line x1="126" y1="202" x2="131.4" y2="202" stroke="#444" stroke-width="0.7"/>
<line x1="126" y1="203.8" x2="131.4" y2="203.8" stroke="#444" stroke-width="0.7"/>
<rect x="132.6" y="197.8" width="3" height="7.6" fill="#b8b5ae" stroke="#444" stroke-width="0.5"/>
<rect x="125" y="211.2" width="10.6" height="3.4" fill="#fff" stroke="#444" stroke-width="0.7"/>
<rect x="132.4" y="211.2" width="3.2" height="3.4" fill="#222"/>
<rect x="125" y="214.6" width="10.6" height="5.6" fill="#fff" stroke="#444" stroke-width="0.7"/>
<line x1="126" y1="216.4" x2="131" y2="216.4" stroke="#444" stroke-width="0.7"/>
<line x1="126" y1="218.4" x2="131" y2="218.4" stroke="#444" stroke-width="0.7"/>
<rect x="132.6" y="214.6" width="3" height="5.6" fill="#b8b5ae" stroke="#444" stroke-width="0.5"/>
<path d="M126.4 233.6h7.6M126.4 227h7.6M128 230.4h5.4" fill="none" stroke="#333" stroke-width="1"/>
<path d="M131.6 227v3.4M127.6 230.4v3.2" fill="none" stroke="#333" stroke-width="0.9"/>
<rect x="126.4" y="240.4" width="7.6" height="9.6" fill="#d4d0c8" stroke="#333" stroke-width="0.8"/>
<line x1="126.4" y1="245.2" x2="134" y2="245.2" stroke="#333" stroke-width="0.7"/>
<path d="M128.4 244L132 244L130.2 242Z" fill="#000"/>
<path d="M128.4 246.6L132 246.6L130.2 248.6Z" fill="#000"/>
<rect x="127.6" y="255.2" width="5.2" height="10" fill="#d4d0c8" stroke="#333" stroke-width="0.7"/>
<path d="M128.3 258.05L132.1 258.05L130.2 255.95Z" fill="#000"/>
<path d="M128.3 262.35L132.1 262.35L130.2 264.45Z" fill="#000"/>
<rect x="128.4" y="259.2" width="3.6" height="2.2" fill="#777"/>
<text x="130.4" y="279.6" font-size="12.4" fill="#111" text-anchor="middle" font-family="Liberation Serif">A</text>
<rect x="125.6" y="283.2" width="9.6" height="8" fill="#e8f0f8" stroke="#333" stroke-width="0.8"/>
<path d="M126.4 290.4l2.6 -3.4l2 2l1.6 -1.4l2 2.8z" fill="#4a8a5a"/>
<circle cx="132.6" cy="285.6" r="0.9" fill="#e8c020"/>
<line x1="125" y1="296.4" x2="137.5" y2="296.4" stroke="#8f8c85" stroke-width="0.6"/>
<line x1="125" y1="297.1" x2="137.5" y2="297.1" stroke="#fff" stroke-width="0.6"/>
<path d="M126.6 312l6.4 -7.4" fill="none" stroke="#333" stroke-width="1.5"/>
<path d="M129.6 302.4l4 -0.6l2.6 2.8l-1.4 1.2l-2.2 -1.6l-2.2 0.4z" fill="#333"/>
<path d="M134.6 312.4l-6 -6.6" fill="none" stroke="#b89020" stroke-width="1.3"/>
<path d="M126.4 303.6l2.6 0.6l0.4 2.4" fill="none" stroke="#555" stroke-width="1.2"/>
<rect x="124" y="317.4" width="1.4" height="1.4" fill="#222"/>
<!-- drawing toolbar 488.5-507.3 -->
<line x1="122" y1="488.7" x2="804" y2="488.7" stroke="#fff" stroke-width="0.7"/>
<line x1="122" y1="506.8" x2="804" y2="506.8" stroke="#8f8c85" stroke-width="0.7"/>
<line x1="122" y1="507.5" x2="804" y2="507.5" stroke="#fff" stroke-width="0.6"/>
<line x1="124.2" y1="491.5" x2="124.2" y2="504.5" stroke="#fff" stroke-width="0.8"/>
<line x1="125.1" y1="491.5" x2="125.1" y2="504.5" stroke="#8a8780" stroke-width="0.8"/>
<text x="130.2" y="501.2" font-size="7.4" fill="#111" textLength="35.6" lengthAdjust="spacingAndGlyphs" font-family="&quot;Liberation Sans&quot;, &quot;Noto Sans CJK JP&quot;, sans-serif">図形の調整</text>
<text x="166" y="501.2" font-size="8.2" fill="#111" textLength="12.4" lengthAdjust="spacingAndGlyphs">(R)</text>
<line x1="169.4" y1="502.3" x2="175" y2="502.3" stroke="#444" stroke-width="0.6"/>
<path d="M181.6 497.3L185.6 497.3L183.6 499.5Z" fill="#000"/>
<path d="M193 493l0 8l1.9 -1.8l1.5 3.2l1.2 -0.6l-1.5 -3l2.5 0z" fill="#fff" stroke="#111" stroke-width="0.75"/>
<path d="M213.4 496.2a3.6 3.6 0 1 1 -3.4 -1.6" fill="none" stroke="#9a978f" stroke-width="1.1"/>
<path d="M209.8 492.6l2.6 1.8l-2.6 1.6z" fill="#8a8780"/>
<circle cx="210.8" cy="498.6" r="0.9" fill="#8a8780"/>
<line x1="220.2" y1="491" x2="220.2" y2="505" stroke="#8a8780" stroke-width="0.7"/>
<line x1="220.9" y1="491" x2="220.9" y2="505" stroke="#fff" stroke-width="0.7"/>
<text x="227" y="501.2" font-size="7.4" fill="#111" textLength="40.2" lengthAdjust="spacingAndGlyphs" font-family="&quot;Liberation Sans&quot;, &quot;Noto Sans CJK JP&quot;, sans-serif">オートシェイプ</text>
<text x="267.4" y="501.2" font-size="8.2" fill="#111" textLength="12.4" lengthAdjust="spacingAndGlyphs">(U)</text>
<line x1="270.8" y1="502.3" x2="276.6" y2="502.3" stroke="#444" stroke-width="0.6"/>
<path d="M282.2 497.3L286.2 497.3L284.2 499.5Z" fill="#000"/>
<line x1="292.4" y1="493.8" x2="301" y2="502.4" stroke="#222" stroke-width="0.9"/>
<line x1="310" y1="494.2" x2="315.4" y2="500.6" stroke="#222" stroke-width="1"/>
<path d="M316.6 502l-3.8 -1.2l2.4 -2.2z" fill="#111"/>
<rect x="321.4" y="494" width="9.8" height="8" fill="none" stroke="#222" stroke-width="0.9"/>
<ellipse cx="341" cy="498" rx="5.4" ry="4" fill="none" stroke="#222" stroke-width="0.9"/>
<rect x="351.2" y="493.6" width="9" height="8.6" fill="#fff" stroke="#222" stroke-width="0.8"/>
<text x="355.7" y="500.4" font-size="6" fill="#111" text-anchor="middle" font-weight="bold">A</text>
<line x1="352.6" y1="500.8" x2="358.8" y2="500.8" stroke="#333" stroke-width="0.6"/>
<rect x="367" y="493.6" width="9" height="8.6" fill="#fff" stroke="#222" stroke-width="0.8"/>
<line x1="369.4" y1="495" x2="369.4" y2="500.8" stroke="#333" stroke-width="0.6"/>
<line x1="371.6" y1="495" x2="371.6" y2="500.8" stroke="#333" stroke-width="0.6"/>
<line x1="373.8" y1="495" x2="373.8" y2="500.8" stroke="#333" stroke-width="0.6"/>
<text x="381.4" y="502.4" font-size="11.4" fill="#2030b0" font-weight="bold" font-style="italic" font-family="Liberation Serif">4</text>
<line x1="388.6" y1="493.4" x2="388.6" y2="502.6" stroke="#111" stroke-width="1.1"/>
<rect x="394" y="493.4" width="9.8" height="9.2" fill="#f4f0e8" stroke="#222" stroke-width="0.8"/>
<circle cx="398.8" cy="496.6" r="1.7" fill="#d04040"/>
<path d="M396.2 501.8q2.6 -4.2 5.4 0z" fill="#2848b0"/>
<line x1="408.6" y1="491" x2="408.6" y2="505" stroke="#8a8780" stroke-width="0.7"/>
<line x1="409.3" y1="491" x2="409.3" y2="505" stroke="#fff" stroke-width="0.7"/>
<path d="M416 497l3.6 -3.4l3.6 3.2l-3.8 3z" fill="#eee" stroke="#333" stroke-width="0.6"/>
<path d="M418.4 493.8q1.4 -2.4 3 -0.4" fill="none" stroke="#333" stroke-width="0.7"/>
<path d="M423.4 497q1.4 1.6 0.2 2.6q-1 -1 -0.2 -2.6z" fill="#2040c0"/>
<rect x="414.8" y="500.8" width="10.6" height="2.3" fill="#f4ec20"/>
<path d="M428.5 497.35L432.3 497.35L430.4 499.45Z" fill="#000"/>
<path d="M440.6 499.8l5.6 -6l1.6 1.4l-5.6 6l-2.4 0.8z" fill="#c8a040" stroke="#222" stroke-width="0.5"/>
<rect x="438.6" y="500.8" width="10.6" height="2.3" fill="#2030d0"/>
<path d="M452.5 497.35L456.3 497.35L454.4 499.45Z" fill="#000"/>
<text x="466" y="500" font-size="9.6" fill="#2030b0" text-anchor="middle" font-weight="bold" font-family="Liberation Serif">A</text>
<rect x="461" y="500.8" width="10.4" height="2.3" fill="#e02020"/>
<path d="M475.7 497.35L479.5 497.35L477.6 499.45Z" fill="#000"/>
<line x1="485" y1="494.6" x2="494.6" y2="494.6" stroke="#222" stroke-width="0.7"/>
<line x1="485" y1="497.4" x2="494.6" y2="497.4" stroke="#222" stroke-width="1.3"/>
<line x1="485" y1="500.8" x2="494.6" y2="500.8" stroke="#222" stroke-width="2"/>
<line x1="500.2" y1="494.6" x2="509" y2="494.6" stroke="#222" stroke-width="0.7" stroke-dasharray="1 0.8"/>
<line x1="500.2" y1="497.6" x2="509" y2="497.6" stroke="#222" stroke-width="0.8" stroke-dasharray="2 1"/>
<line x1="500.2" y1="500.8" x2="509" y2="500.8" stroke="#222" stroke-width="0.9" stroke-dasharray="3.4 1.2"/>
<line x1="517.4" y1="495.2" x2="527.4" y2="495.2" stroke="#222" stroke-width="0.9"/>
<line x1="517.4" y1="500.6" x2="527.4" y2="500.6" stroke="#222" stroke-width="0.9"/>
<path d="M517 495.2l2.6 -1.6v3.2zM527.8 500.6l-2.6 -1.6v3.2z" fill="#111"/>
<path d="M527.8 495.2l-2.2 -1.4v2.8z M517 500.6l2.2 -1.4v2.8z" fill="#111"/>
<rect x="532.8" y="495.4" width="7.4" height="7.4" fill="#333"/>
<rect x="531.4" y="494" width="7.4" height="7.4" fill="#10909a" stroke="#033" stroke-width="0.7"/>
<path d="M546.4 496.4l3 -2.6h6.8v6.4l-3 2.8z" fill="#e8e8e8" stroke="#555" stroke-width="0.6"/>
<rect x="546.4" y="496.4" width="6.8" height="6.6" fill="#10a0a8" stroke="#055" stroke-width="0.6"/>
<path d="M560.8 500.2L564.4 500.2L562.6 502.2Z" fill="#000"/>
<line x1="566.8" y1="489.4" x2="566.8" y2="506.4" stroke="#8f8c85" stroke-width="0.7"/>
<line x1="567.5" y1="489.4" x2="567.5" y2="506.4" stroke="#fff" stroke-width="0.6"/>
<!-- status bar 507.5-519 -->
<text x="128.2" y="516.6" font-size="7.4" fill="#111" textLength="23.4" lengthAdjust="spacingAndGlyphs" font-family="&quot;Liberation Sans&quot;, &quot;Noto Sans CJK JP&quot;, sans-serif">コマンド</text>
<line x1="570" y1="509.2" x2="570" y2="518.2" stroke="#8f8c85" stroke-width="0.6"/>
<line x1="570.7" y1="509.2" x2="570.7" y2="518.2" stroke="#fff" stroke-width="0.6"/>
<line x1="574.4" y1="509.4" x2="596.2" y2="509.4" stroke="#8f8c85" stroke-width="0.7"/>
<line x1="574.7" y1="509.4" x2="574.7" y2="518.4" stroke="#8f8c85" stroke-width="0.7"/>
<line x1="574.4" y1="518.2" x2="596.2" y2="518.2" stroke="#fff" stroke-width="0.7"/>
<line x1="595.9" y1="509.4" x2="595.9" y2="518.4" stroke="#fff" stroke-width="0.7"/>
<line x1="598.4" y1="509.4" x2="672.6" y2="509.4" stroke="#8f8c85" stroke-width="0.7"/>
<line x1="598.7" y1="509.4" x2="598.7" y2="518.4" stroke="#8f8c85" stroke-width="0.7"/>
<line x1="598.4" y1="518.2" x2="672.6" y2="518.2" stroke="#fff" stroke-width="0.7"/>
<line x1="672.3" y1="509.4" x2="672.3" y2="518.4" stroke="#fff" stroke-width="0.7"/>
<line x1="675" y1="509.4" x2="692.4" y2="509.4" stroke="#8f8c85" stroke-width="0.7"/>
<line x1="675.3" y1="509.4" x2="675.3" y2="518.4" stroke="#8f8c85" stroke-width="0.7"/>
<line x1="675" y1="518.2" x2="692.4" y2="518.2" stroke="#fff" stroke-width="0.7"/>
<line x1="692.1" y1="509.4" x2="692.1" y2="518.4" stroke="#fff" stroke-width="0.7"/>
<line x1="694.8" y1="509.4" x2="716" y2="509.4" stroke="#8f8c85" stroke-width="0.7"/>
<line x1="695.1" y1="509.4" x2="695.1" y2="518.4" stroke="#8f8c85" stroke-width="0.7"/>
<line x1="694.8" y1="518.2" x2="716" y2="518.2" stroke="#fff" stroke-width="0.7"/>
<line x1="715.7" y1="509.4" x2="715.7" y2="518.4" stroke="#fff" stroke-width="0.7"/>
<line x1="718.6" y1="509.4" x2="736.4" y2="509.4" stroke="#8f8c85" stroke-width="0.7"/>
<line x1="718.9" y1="509.4" x2="718.9" y2="518.4" stroke="#8f8c85" stroke-width="0.7"/>
<line x1="718.6" y1="518.2" x2="736.4" y2="518.2" stroke="#fff" stroke-width="0.7"/>
<line x1="736.1" y1="509.4" x2="736.1" y2="518.4" stroke="#fff" stroke-width="0.7"/>
<line x1="738.8" y1="509.4" x2="759.8" y2="509.4" stroke="#8f8c85" stroke-width="0.7"/>
<line x1="739.1" y1="509.4" x2="739.1" y2="518.4" stroke="#8f8c85" stroke-width="0.7"/>
<line x1="738.8" y1="518.2" x2="759.8" y2="518.2" stroke="#fff" stroke-width="0.7"/>
<line x1="759.5" y1="509.4" x2="759.5" y2="518.4" stroke="#fff" stroke-width="0.7"/>
<line x1="762" y1="509.4" x2="781" y2="509.4" stroke="#8f8c85" stroke-width="0.7"/>
<line x1="762.3" y1="509.4" x2="762.3" y2="518.4" stroke="#8f8c85" stroke-width="0.7"/>
<line x1="762" y1="518.2" x2="781" y2="518.2" stroke="#fff" stroke-width="0.7"/>
<line x1="780.7" y1="509.4" x2="780.7" y2="518.4" stroke="#fff" stroke-width="0.7"/>
<line x1="783.6" y1="509.4" x2="801.4" y2="509.4" stroke="#8f8c85" stroke-width="0.7"/>
<line x1="783.9" y1="509.4" x2="783.9" y2="518.4" stroke="#8f8c85" stroke-width="0.7"/>
<line x1="783.6" y1="518.2" x2="801.4" y2="518.2" stroke="#fff" stroke-width="0.7"/>
<line x1="801.1" y1="509.4" x2="801.1" y2="518.4" stroke="#fff" stroke-width="0.7"/>
</g>
<!-- clouds -->
<path d="M26.5 187.31A16.1 27.31 0 0 1 50.59 160.06A12.72 21.6 0 0 1 70.74 154.8A10.41 17.67 0 0 1 88.33 151.97A11.58 19.6 0 0 1 108.56 161.17A12.72 21.62 0 0 1 116.91 190.55A16.15 27.4 0 0 1 106.38 234.37A13.79 23.38 0 0 1 85.28 254.02A16.1 27.39 0 0 1 56.49 261.3A18.41 31.34 0 0 1 31.04 250.02A10.4 17.59 0 0 1 22.24 220.54A10.36 17.67 0 0 1 26.41 187.71Z" fill="#10ccd8"/>
<text x="41.6" y="190.9" font-size="21" fill="#000" textLength="39.6" lengthAdjust="spacingAndGlyphs" font-weight="bold" stroke="#000" stroke-width="0.45">LOG</text>
<text x="41.4" y="220" font-size="23" fill="#000" font-weight="bold" textLength="46.4" lengthAdjust="spacingAndGlyphs" font-family="&quot;Liberation Sans&quot;, &quot;Noto Sans CJK SC&quot;, sans-serif">数据</text>
<path d="M789.81 194.51A16.63 26.93 0 0 1 814.69 167.64A13.13 21.3 0 0 1 835.51 162.46A10.75 17.42 0 0 1 853.68 159.67A11.96 19.33 0 0 1 874.58 168.74A13.13 21.31 0 0 1 883.2 197.71A16.69 27.02 0 0 1 872.33 240.91A14.25 23.05 0 0 1 850.53 260.28A16.63 27.01 0 0 1 820.79 267.47A19.01 30.9 0 0 1 794.5 256.35A10.74 17.34 0 0 1 785.41 227.27A10.7 17.42 0 0 1 789.72 194.91Z" fill="url(#rg)"/>
<text x="805.2" y="200.6" font-size="23.6" fill="#000" font-weight="bold" textLength="47.4" lengthAdjust="spacingAndGlyphs" font-family="&quot;Liberation Sans&quot;, &quot;Noto Sans CJK SC&quot;, sans-serif">作成</text>
<text x="805.2" y="229.2" font-size="23.6" fill="#000" font-weight="bold" textLength="47.4" lengthAdjust="spacingAndGlyphs" font-family="&quot;Liberation Sans&quot;, &quot;Noto Sans CJK SC&quot;, sans-serif">图表</text>
<text x="805.2" y="256.8" font-size="23.6" fill="#000" font-weight="bold" textLength="47.4" lengthAdjust="spacingAndGlyphs" font-family="&quot;Liberation Sans&quot;, &quot;Noto Sans CJK SC&quot;, sans-serif">分析</text>
<circle cx="771" cy="260" r="8.7" fill="url(#rg2)"/>
<circle cx="749.5" cy="275.3" r="5.5" fill="#8c2a2a"/>
<circle cx="732.8" cy="287.2" r="2.9" fill="#8c2a2a"/>
</svg>
</body></html>
